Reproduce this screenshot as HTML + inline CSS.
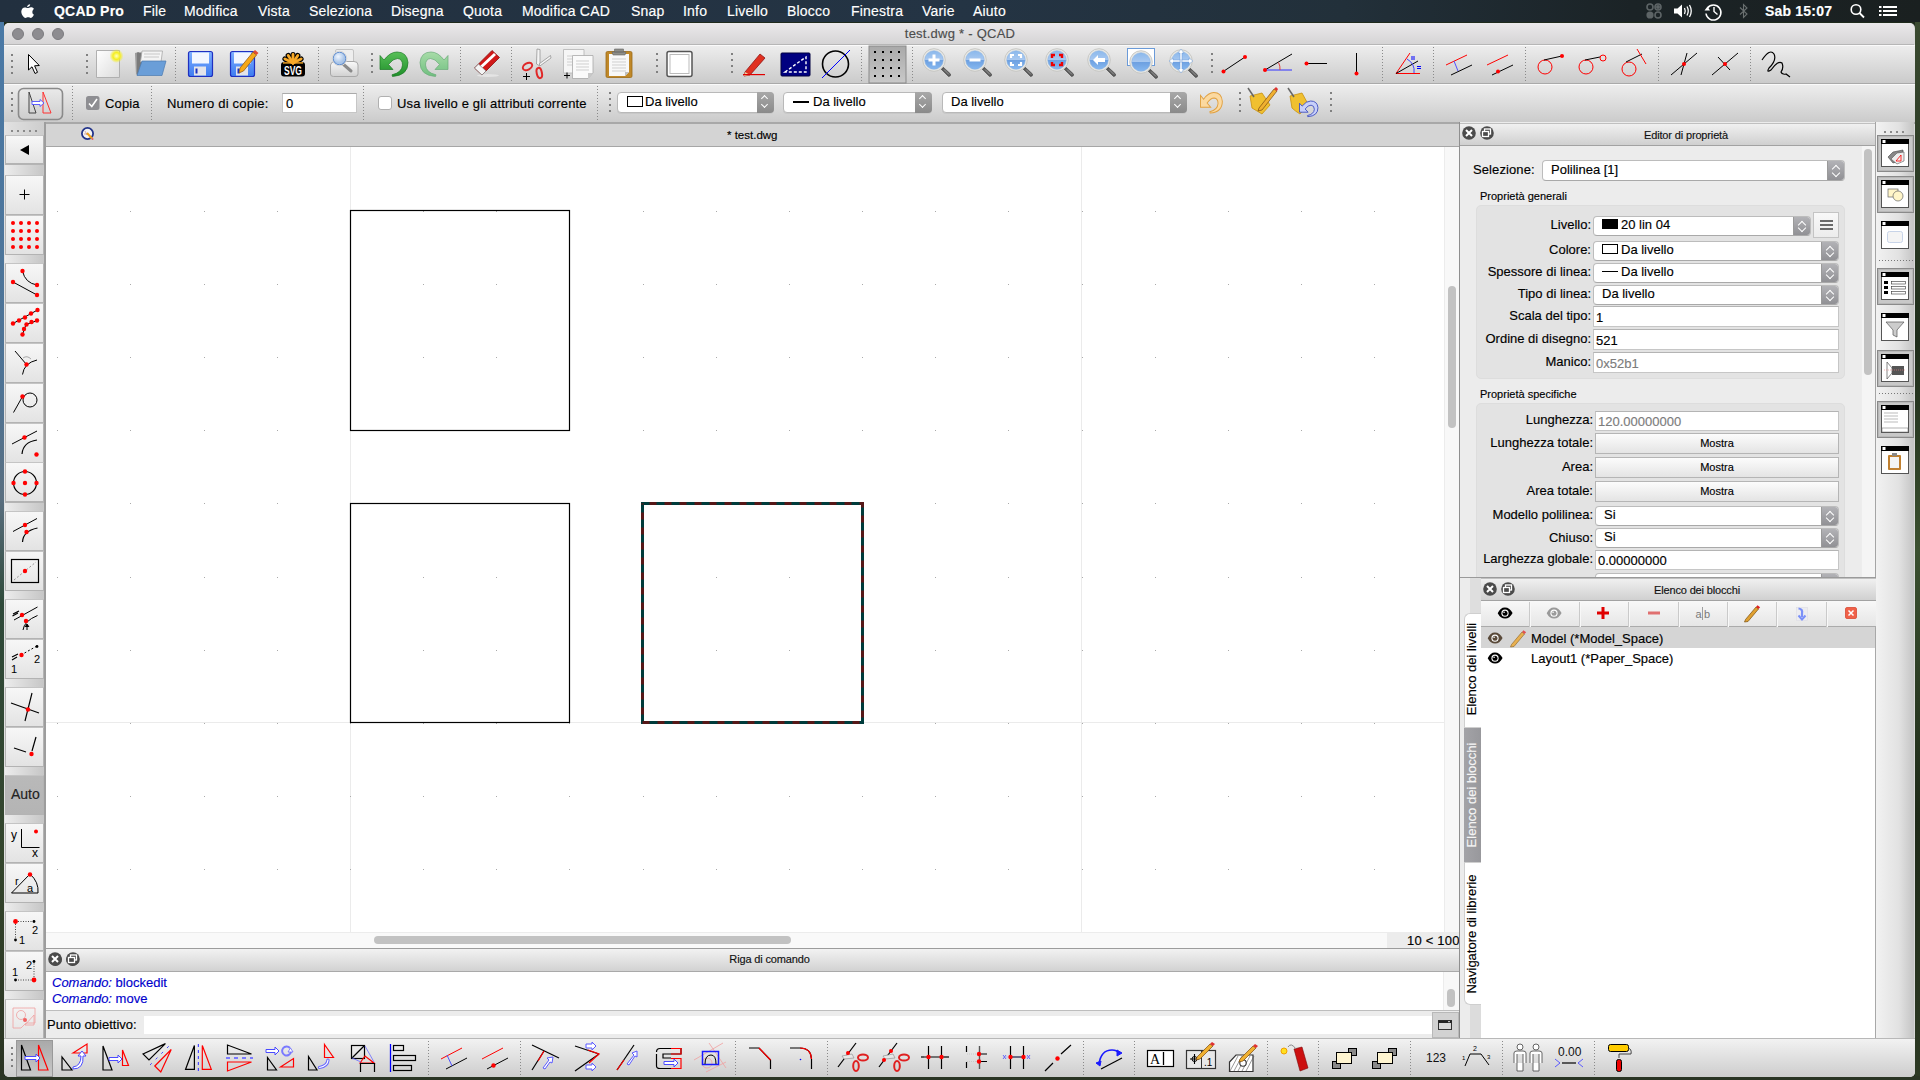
<!DOCTYPE html>
<html><head><meta charset="utf-8">
<style>
*{margin:0;padding:0;box-sizing:border-box}
html,body{width:1920px;height:1080px;overflow:hidden;font-family:"Liberation Sans",sans-serif;font-size:13px;color:#000;-webkit-text-stroke:0.15px currentColor}
body{position:relative;background:#1f2a1c}
.a{position:absolute}
svg{position:absolute;overflow:visible}
#menubar{left:0;top:0;width:1920px;height:22px;background:linear-gradient(90deg,#22303f 0,#243444 50%,#22303a 70%,#1b2326 85%,#1a2020 100%);color:#fff;font-size:14px}
#menubar span{position:absolute;top:3px;white-space:nowrap;letter-spacing:0.2px}
#title{left:4px;top:23px;width:1910px;height:22px;background:linear-gradient(#ebe9eb,#d5d4d5);border-bottom:1px solid #b6b6b6;border-radius:5px 5px 0 0;text-align:center;font-size:13px;color:#4d4d4d;line-height:22px;letter-spacing:0.25px;padding-left:2px}
.tl{position:absolute;top:5px;width:12px;height:12px;border-radius:50%;background:#8d8c90;border:1px solid #7c7b7f}
.tb{left:4px;width:1911px;background:linear-gradient(#ededed,#cbcbcb);border-top:1px solid #fafafa;border-bottom:1px solid #aaaaaa}
.vsep{position:absolute;width:0;border-left:2px dotted #7a7a7a}
.hand{position:absolute;width:0;border-left:2px dotted #888}
#leftdock{left:4px;top:122px;width:41px;height:916px;background:linear-gradient(90deg,#e6e6e6,#cfcfcf);border-right:1px solid #b8b8b8}
.lb{position:absolute;left:1px;width:39px;height:30px;background:linear-gradient(#f4f4f4,#e4e4e4);border:1px solid #bdbdbd;border-radius:1px}
.lg{position:absolute;left:1px;width:39px;background:linear-gradient(90deg,#e4e4e4,#cdcdcd)}
#tabbar{left:46px;top:124px;width:1413px;height:23px;background:#d4d4d4;border-bottom:1px solid #a6a6a6;font-size:12px}
#canvas{left:46px;top:147px;width:1398px;height:785px;background:#fff;overflow:hidden}
#vscroll{left:1444px;top:147px;width:15px;height:785px;background:#f8f8f8;border-left:1px solid #ececec}
#hscroll{left:46px;top:932px;width:1413px;height:16px;background:#f9f9f9;border-top:1px solid #ececec}
.thumb{position:absolute;background:#c2c2c2;border-radius:4px}
.dtitle{position:absolute;height:24px;background:linear-gradient(#f2f2f2,#d2d2d2);border-top:1px solid #9c9c9c;border-bottom:1px solid #a9a9a9;font-size:11px;text-align:center;line-height:21px;color:#111;letter-spacing:-0.15px}
.cbtn{position:absolute;top:4px;width:13px;height:13px;border-radius:50%;background:#4a4a4a}
#cmdout{left:46px;top:972px;width:1413px;height:39px;background:#fff;border-bottom:1px solid #bdbdbd;color:#0000cc;font-size:13px}
#cmdin{left:46px;top:1011px;width:1413px;height:27px;background:#ececec}
#prop{left:1459px;top:122px;width:417px;height:456px;background:#ececec;border-left:2px solid #9d9d9d}
#tabs{left:1459px;top:578px;width:22px;height:460px;background:#ececec;border-left:2px solid #9d9d9d}
#blocks{left:1481px;top:578px;width:395px;height:460px;background:#fff}
#rdock{left:1876px;top:122px;width:38px;height:916px;background:linear-gradient(90deg,#ececec,#cfcfcf)}
#btb{left:4px;top:1038px;width:1911px;height:39px;background:linear-gradient(#f2f2f2,#cdcdcd);border-top:1px solid #b8b8b8;border-radius:0 0 5px 5px}
.lbl{position:absolute;white-space:nowrap;font-size:13px}
.field{position:absolute;background:#fff;border:1px solid #c4c4c4;height:20px;font-size:12px;line-height:18px;padding-left:3px;white-space:nowrap}
.combo{position:absolute;background:#fff;border:1px solid #b9b9b9;border-radius:4px;height:20px;font-size:12px;line-height:18px;padding-left:6px;white-space:nowrap;box-shadow:0 1px 0 #c8c8c8}
.combo i{position:absolute;right:-1px;top:-1px;width:17px;height:20px;background:linear-gradient(#a8a8a8,#8a8a8a);border-radius:0 4px 4px 0}
.combo i:before{content:"";position:absolute;left:5px;top:4px;width:4px;height:4px;border-left:1.5px solid #fff;border-top:1.5px solid #fff;transform:rotate(45deg)}
.combo i:after{content:"";position:absolute;left:5px;top:10px;width:4px;height:4px;border-right:1.5px solid #fff;border-bottom:1.5px solid #fff;transform:rotate(45deg)}
.mbtn{position:absolute;height:21px;background:linear-gradient(#fbfbfb,#e3e3e3);border:1px solid #b8b8b8;font-size:11px;text-align:center;line-height:19px}
.group{position:absolute;background:#e3e3e3;border:1px solid #dcdcdc;border-radius:5px}
.cb{background:#fff;border:1px solid #bcbcbc;border-bottom-color:#a9a9a9;border-radius:4px;overflow:hidden}
.cba{right:0;top:0;background:linear-gradient(#b2b2b6,#8d8d91);border-left:1px solid #9a9a9a}
.cba:before{content:"";position:absolute;left:5px;top:5px;width:5px;height:5px;border-left:1.5px solid #fff;border-top:1.5px solid #fff;transform:rotate(45deg)}
.cba:after{content:"";position:absolute;left:5px;bottom:6px;width:5px;height:5px;border-right:1.5px solid #fff;border-bottom:1.5px solid #fff;transform:rotate(45deg)}
.fld{background:#fff;border:1px solid #c6c6c6;border-top-color:#b4b4b4}
.grp{background:#e3e3e3;border:1px solid #dddddd;border-radius:5px}
.mb{background:linear-gradient(#fcfcfc,#e4e4e4);border:1px solid #b5b5b5;font-size:11px;text-align:center;line-height:19px}
.dtb{background:linear-gradient(#f0f0f0,#d0d0d0);border-bottom:1px solid #a2a2a2;border-top:1px solid #c0c0c0}
</style></head><body>

<!-- desktop -->
<div class="a" style="left:0;top:22px;width:4px;height:1058px;background:linear-gradient(#4a79a6,#4f7394 35%,#5a6f80 45%,#2f4a3a 55%,#34452c 80%,#2a3322)"></div>
<div class="a" style="left:1915px;top:22px;width:5px;height:1058px;background:linear-gradient(#3a4a30,#1e2c1a 30%,#3b5030 50%,#1e2a18 75%,#2d3a24)"></div>
<div class="a" style="left:0;top:1076px;width:1920px;height:4px;background:#2a3524"></div>

<div class="a" style="left:4px;top:23px;width:1911px;height:1054px;background:#d8d8d8;border-radius:5px"></div>
<div id="menubar" class="a">
<span style="left:54px;font-weight:bold">QCAD Pro</span>
<span style="left:143px">File</span>
<span style="left:184px">Modifica</span>
<span style="left:258px">Vista</span>
<span style="left:309px">Seleziona</span>
<span style="left:391px">Disegna</span>
<span style="left:463px">Quota</span>
<span style="left:522px">Modifica CAD</span>
<span style="left:631px">Snap</span>
<span style="left:683px">Info</span>
<span style="left:727px">Livello</span>
<span style="left:787px">Blocco</span>
<span style="left:851px">Finestra</span>
<span style="left:922px">Varie</span>
<span style="left:973px">Aiuto</span>
<span style="left:1765px;font-weight:bold">Sab 15:07</span>
<svg width="1920" height="24" style="left:0;top:0">
<path d="M30.2 4.2 C28.6 4.3 27.2 5.4 27 7 C28.6 7.1 30.1 5.9 30.2 4.2 Z M33.9 14.6 C33.3 16.1 32.2 18 30.9 18 C29.8 18 29.5 17.3 28.2 17.3 C26.9 17.3 26.5 18 25.5 18 C24.1 18 21.3 15 21.3 11.6 C21.3 8.9 23.1 7.4 24.8 7.4 C26 7.4 26.8 8.1 27.8 8.1 C28.7 8.1 29.5 7.3 30.9 7.3 C31.7 7.3 33.1 7.6 34 8.9 C31.6 10.3 32.1 13.9 33.9 14.6 Z" fill="#fff"/>
<g fill="none" stroke="#5d6466" stroke-width="1.6"><circle cx="1650" cy="7" r="3"/><circle cx="1658" cy="7" r="3"/><circle cx="1658" cy="15" r="3"/></g>
<circle cx="1650" cy="15" r="3.6" fill="#5d6466"/><circle cx="1658" cy="7" r="2" fill="#5d6466"/>
<path d="M1674 8.5 H1677.5 L1682 4.5 V17.5 L1677.5 13.5 H1674 Z" fill="#fff"/>
<path d="M1684.5 8 Q1686 11 1684.5 14 M1687 6.5 Q1689.5 11 1687 15.5 M1689.5 5 Q1693 11 1689.5 17" stroke="#fff" stroke-width="1.3" fill="none"/>
<path d="M1707.5 8 A7.5 7.5 0 1 1 1706 13.5" stroke="#fff" stroke-width="1.5" fill="none"/>
<path d="M1704.5 10.5 L1707.5 6.5 L1710 10.5 Z" fill="#fff"/>
<path d="M1714 7 V11.5 L1717.5 14.5" stroke="#fff" stroke-width="1.4" fill="none"/>
<path d="M1740 7.5 L1747 14 L1743.5 17.5 V4.5 L1747 8 L1740 14.5" stroke="#6a7070" stroke-width="1.1" fill="none"/>
<circle cx="1856" cy="9.5" r="4.8" stroke="#fff" stroke-width="1.6" fill="none"/>
<line x1="1859.5" y1="13" x2="1864" y2="17.5" stroke="#fff" stroke-width="1.8"/>
<g fill="#fff"><rect x="1879" y="6" width="2.5" height="2"/><rect x="1879" y="10" width="2.5" height="2"/><rect x="1879" y="14" width="2.5" height="2"/>
<rect x="1883" y="6" width="14" height="2"/><rect x="1883" y="10" width="14" height="2"/><rect x="1883" y="14" width="14" height="2"/></g>
</svg>

</div>

<div id="title" class="a">test.dwg * - QCAD
 <div class="tl" style="left:8px"></div><div class="tl" style="left:28px"></div><div class="tl" style="left:48px"></div>
</div>

<div class="a tb" style="top:45px;height:39px"></div>
<svg width="1920" height="1080" style="left:0;top:0;z-index:5"><defs>
<linearGradient id="lens" x1="0" y1="0" x2="0" y2="1"><stop offset="0" stop-color="#8ab8ec"/><stop offset="0.48" stop-color="#a8c8f0"/><stop offset="0.5" stop-color="#6c9fe0"/><stop offset="1" stop-color="#86b8f0"/></linearGradient>
<linearGradient id="paper" x1="0" y1="0" x2="1" y2="1"><stop offset="0" stop-color="#ffffff"/><stop offset="1" stop-color="#dcdcdc"/></linearGradient>
<linearGradient id="floppy" x1="0" y1="0" x2="0" y2="1"><stop offset="0" stop-color="#7fb0ff"/><stop offset="1" stop-color="#3d7bf0"/></linearGradient>
<radialGradient id="glow"><stop offset="0" stop-color="#ffffc0"/><stop offset="0.5" stop-color="#f5ee20"/><stop offset="1" stop-color="#f5ee20" stop-opacity="0"/></radialGradient>
<linearGradient id="gridbtn" x1="0" y1="0" x2="0" y2="1"><stop offset="0" stop-color="#a9a9a9"/><stop offset="1" stop-color="#c9c9c9"/></linearGradient>
</defs>
<rect x="11" y="54" width="2" height="2" fill="#808080"/><rect x="11" y="60" width="2" height="2" fill="#808080"/><rect x="11" y="66" width="2" height="2" fill="#808080"/><rect x="11" y="72" width="2" height="2" fill="#808080"/>
<rect x="86" y="54" width="2" height="2" fill="#808080"/><rect x="86" y="60" width="2" height="2" fill="#808080"/><rect x="86" y="66" width="2" height="2" fill="#808080"/><rect x="86" y="72" width="2" height="2" fill="#808080"/>
<path d="M28.5 54.5 L28.5 70 L32 66.8 L35 73.5 L37.5 72.3 L34.6 65.8 L39.3 65.5 Z" fill="#fff" stroke="#000" stroke-width="1" stroke-linejoin="round"/>
<path d="M96.5 50.5 H119.5 V77.5 H96.5 Z" fill="url(#paper)" stroke="#b0b0b0"/>
<circle cx="116.5" cy="56" r="7" fill="url(#glow)"/>
<path d="M135 53 L139 52 L137 74 L136 75 Z" fill="#9a9a9a"/>
<path d="M137 52.5 H144 L141 75 H137 Z" fill="#7a7a7a"/>
<path d="M142 51 H162.5 L161 62 H140.5 Z" fill="#f4f4f4" stroke="#a8a8a8" stroke-width="0.8"/>
<path d="M144 54 H160 M144 57 H159" stroke="#c8c8c8" stroke-width="1"/>
<path d="M142 61 H166 L162 75.5 H137 Z" fill="#6a9ed8" stroke="#4a7ab0" stroke-width="0.7"/>
<rect x="175" y="47" width="1" height="1" fill="#8a8a8a"/><rect x="175" y="50" width="1" height="1" fill="#8a8a8a"/><rect x="175" y="53" width="1" height="1" fill="#8a8a8a"/><rect x="175" y="56" width="1" height="1" fill="#8a8a8a"/><rect x="175" y="59" width="1" height="1" fill="#8a8a8a"/><rect x="175" y="62" width="1" height="1" fill="#8a8a8a"/><rect x="175" y="65" width="1" height="1" fill="#8a8a8a"/><rect x="175" y="68" width="1" height="1" fill="#8a8a8a"/><rect x="175" y="71" width="1" height="1" fill="#8a8a8a"/><rect x="175" y="74" width="1" height="1" fill="#8a8a8a"/><rect x="175" y="77" width="1" height="1" fill="#8a8a8a"/><rect x="175" y="80" width="1" height="1" fill="#8a8a8a"/>
<rect x="188.5" y="51.5" width="24" height="25" rx="2" fill="url(#floppy)" stroke="#2030c0" stroke-width="1.2"/>
<rect x="192" y="52.5" width="17" height="11" fill="#f2f6ff"/>
<rect x="194" y="66.5" width="12" height="9" fill="#e4e4ea"/>
<rect x="195.5" y="68.5" width="2" height="5" fill="#1830c0"/>
<rect x="230.5" y="51.5" width="24" height="25" rx="2" fill="url(#floppy)" stroke="#2030c0" stroke-width="1.2"/>
<rect x="234" y="52.5" width="17" height="11" fill="#f2f6ff"/>
<rect x="236" y="66.5" width="12" height="9" fill="#e4e4ea"/>
<rect x="237.5" y="68.5" width="2" height="5" fill="#1830c0"/>
<path d="M240 68 L253 52 L256.5 55 L243.5 71 L239 73 Z" fill="#f5a818" stroke="#8a5010" stroke-width="0.7"/>
<path d="M253 52 L255 50 L258.5 53 L256.5 55 Z" fill="#e04a30"/>
<rect x="267" y="47" width="1" height="1" fill="#8a8a8a"/><rect x="267" y="50" width="1" height="1" fill="#8a8a8a"/><rect x="267" y="53" width="1" height="1" fill="#8a8a8a"/><rect x="267" y="56" width="1" height="1" fill="#8a8a8a"/><rect x="267" y="59" width="1" height="1" fill="#8a8a8a"/><rect x="267" y="62" width="1" height="1" fill="#8a8a8a"/><rect x="267" y="65" width="1" height="1" fill="#8a8a8a"/><rect x="267" y="68" width="1" height="1" fill="#8a8a8a"/><rect x="267" y="71" width="1" height="1" fill="#8a8a8a"/><rect x="267" y="74" width="1" height="1" fill="#8a8a8a"/><rect x="267" y="77" width="1" height="1" fill="#8a8a8a"/><rect x="267" y="80" width="1" height="1" fill="#8a8a8a"/>
<line x1="293" y1="64" x2="285" y2="59" stroke="#000" stroke-width="5.2" stroke-linecap="round"/><line x1="293" y1="64" x2="288.2" y2="55.5" stroke="#000" stroke-width="5.2" stroke-linecap="round"/><line x1="293" y1="64" x2="293" y2="54.5" stroke="#000" stroke-width="5.2" stroke-linecap="round"/><line x1="293" y1="64" x2="297.8" y2="55.5" stroke="#000" stroke-width="5.2" stroke-linecap="round"/><line x1="293" y1="64" x2="301" y2="59" stroke="#000" stroke-width="5.2" stroke-linecap="round"/>
<rect x="281" y="62" width="24" height="14.5" rx="3" fill="#000"/>
<line x1="293" y1="63" x2="285" y2="59" stroke="#f7a928" stroke-width="2.8" stroke-linecap="round"/><line x1="293" y1="63" x2="288.2" y2="55.5" stroke="#f7a928" stroke-width="2.8" stroke-linecap="round"/><line x1="293" y1="63" x2="293" y2="54.5" stroke="#f7a928" stroke-width="2.8" stroke-linecap="round"/><line x1="293" y1="63" x2="297.8" y2="55.5" stroke="#f7a928" stroke-width="2.8" stroke-linecap="round"/><line x1="293" y1="63" x2="301" y2="59" stroke="#f7a928" stroke-width="2.8" stroke-linecap="round"/>
<rect x="283" y="62.2" width="20" height="1.4" fill="#f7a928"/>
<text x="293" y="75" font-family="Liberation Sans" font-weight="bold" font-size="12" fill="#fff" text-anchor="middle" textLength="18" lengthAdjust="spacingAndGlyphs">SVG</text>
<rect x="318" y="47" width="1" height="1" fill="#8a8a8a"/><rect x="318" y="50" width="1" height="1" fill="#8a8a8a"/><rect x="318" y="53" width="1" height="1" fill="#8a8a8a"/><rect x="318" y="56" width="1" height="1" fill="#8a8a8a"/><rect x="318" y="59" width="1" height="1" fill="#8a8a8a"/><rect x="318" y="62" width="1" height="1" fill="#8a8a8a"/><rect x="318" y="65" width="1" height="1" fill="#8a8a8a"/><rect x="318" y="68" width="1" height="1" fill="#8a8a8a"/><rect x="318" y="71" width="1" height="1" fill="#8a8a8a"/><rect x="318" y="74" width="1" height="1" fill="#8a8a8a"/><rect x="318" y="77" width="1" height="1" fill="#8a8a8a"/><rect x="318" y="80" width="1" height="1" fill="#8a8a8a"/>
<defs><linearGradient id="prn" x1="0" y1="0" x2="0" y2="1"><stop offset="0" stop-color="#fafafa"/><stop offset="1" stop-color="#d0d0d0"/></linearGradient><radialGradient id="lens2" cx="0.4" cy="0.35"><stop offset="0" stop-color="#f0f6ff"/><stop offset="1" stop-color="#a8c4e8"/></radialGradient></defs>
<rect x="335.5" y="49.5" width="18" height="14" rx="1.5" fill="#eeeeee" stroke="#c4c4c4"/>
<path d="M330.5 65 Q331 61.5 335 61.5 H354 Q358 61.5 358 65 V74 Q358 76.5 355 76.5 H333.5 Q330.5 76.5 330.5 74 Z" fill="url(#prn)" stroke="#a8a8a8"/>
<line x1="343" y1="64" x2="351" y2="71" stroke="#8a8a8a" stroke-width="3" stroke-linecap="round"/>
<circle cx="339.5" cy="58.5" r="6.3" fill="url(#lens2)" stroke="#5a8ad0" stroke-width="1"/>
<circle cx="339.5" cy="58.5" r="7.3" fill="none" stroke="#d8d8d8" stroke-width="1"/>
<rect x="371" y="53" width="2" height="2" fill="#808080"/><rect x="371" y="59" width="2" height="2" fill="#808080"/><rect x="371" y="65" width="2" height="2" fill="#808080"/><rect x="371" y="71" width="2" height="2" fill="#808080"/>
<defs><linearGradient id="ug" x1="0" y1="0" x2="0" y2="1"><stop offset="0" stop-color="#58c058"/><stop offset="1" stop-color="#1f8f2a"/></linearGradient><linearGradient id="rg" x1="0" y1="0" x2="0" y2="1"><stop offset="0" stop-color="#a8dca8"/><stop offset="1" stop-color="#70bf80"/></linearGradient></defs>
<path d="M380 55.5 L380 69.5 L393 69.5 L388.5 64.5 Q393 58.5 397.5 58.5 Q402.5 59 402.5 65 Q402 72.5 392 74.8 L392.5 76.5 Q408 75.5 408 62.5 Q407 52 397 52 Q390 52 384 60 Z" fill="url(#ug)" stroke="#1a7a22" stroke-width="0.7"/>
<g transform="translate(828,0) scale(-1,1)"><path d="M380 55.5 L380 69.5 L393 69.5 L388.5 64.5 Q393 58.5 397.5 58.5 Q402.5 59 402.5 65 Q402 72.5 392 74.8 L392.5 76.5 Q408 75.5 408 62.5 Q407 52 397 52 Q390 52 384 60 Z" fill="url(#rg)" stroke="#6aaa78" stroke-width="0.7"/></g>
<rect x="460" y="47" width="1" height="1" fill="#8a8a8a"/><rect x="460" y="50" width="1" height="1" fill="#8a8a8a"/><rect x="460" y="53" width="1" height="1" fill="#8a8a8a"/><rect x="460" y="56" width="1" height="1" fill="#8a8a8a"/><rect x="460" y="59" width="1" height="1" fill="#8a8a8a"/><rect x="460" y="62" width="1" height="1" fill="#8a8a8a"/><rect x="460" y="65" width="1" height="1" fill="#8a8a8a"/><rect x="460" y="68" width="1" height="1" fill="#8a8a8a"/><rect x="460" y="71" width="1" height="1" fill="#8a8a8a"/><rect x="460" y="74" width="1" height="1" fill="#8a8a8a"/><rect x="460" y="77" width="1" height="1" fill="#8a8a8a"/><rect x="460" y="80" width="1" height="1" fill="#8a8a8a"/>
<ellipse cx="488" cy="75.5" rx="11" ry="1.5" fill="#e4e4e4"/>
<path d="M474.5 68 L492 50.5 L499.5 57.5 L482 75 Z" fill="#d01818" stroke="#8a1010" stroke-width="0.8"/>
<path d="M479 67 L494 53 L496 55 L481 69 Z" fill="#fff"/>
<path d="M474.5 68 L478.5 64 L486 71 L482 75 Z" fill="#f4f4f4" stroke="#888" stroke-width="0.8"/>
<rect x="511" y="47" width="1" height="1" fill="#8a8a8a"/><rect x="511" y="50" width="1" height="1" fill="#8a8a8a"/><rect x="511" y="53" width="1" height="1" fill="#8a8a8a"/><rect x="511" y="56" width="1" height="1" fill="#8a8a8a"/><rect x="511" y="59" width="1" height="1" fill="#8a8a8a"/><rect x="511" y="62" width="1" height="1" fill="#8a8a8a"/><rect x="511" y="65" width="1" height="1" fill="#8a8a8a"/><rect x="511" y="68" width="1" height="1" fill="#8a8a8a"/><rect x="511" y="71" width="1" height="1" fill="#8a8a8a"/><rect x="511" y="74" width="1" height="1" fill="#8a8a8a"/><rect x="511" y="77" width="1" height="1" fill="#8a8a8a"/><rect x="511" y="80" width="1" height="1" fill="#8a8a8a"/>
<path d="M537 49 L540 49.5 L540 66 L536.5 64 Z" fill="#f4f4f4" stroke="#8a8a8a" stroke-width="0.7"/>
<path d="M539 64 L550.5 55.5 L551 58 L540.5 65.5 Z" fill="#f4f4f4" stroke="#8a8a8a" stroke-width="0.7"/>
<ellipse cx="527.5" cy="66.5" rx="5" ry="3.2" transform="rotate(-28 527.5 66.5)" fill="none" stroke="#e02828" stroke-width="2"/>
<ellipse cx="539.3" cy="73" rx="2.6" ry="5.2" transform="rotate(-12 539.3 73)" fill="none" stroke="#e02828" stroke-width="2"/>
<path d="M523 76.5 H530 M526.5 73 V80" stroke="#000" stroke-width="1"/>
<path d="M563.5 49.5 H584 V73 H563.5 Z" fill="#f6f6f6" stroke="#b4b4b4" stroke-width="0.8"/>
<line x1="567" y1="56" x2="572" y2="56" stroke="#d0d0d0" stroke-width="1"/><line x1="567" y1="59" x2="572" y2="59" stroke="#d0d0d0" stroke-width="1"/><line x1="567" y1="62" x2="572" y2="62" stroke="#d0d0d0" stroke-width="1"/><line x1="567" y1="65" x2="572" y2="65" stroke="#d0d0d0" stroke-width="1"/>
<path d="M572.5 55.5 H593 V73 L588 78.5 H572.5 Z" fill="#fafafa" stroke="#a8a8a8" stroke-width="0.8"/>
<path d="M593 73 L588 78.5 V73 Z" fill="#c8c8c8"/>
<line x1="576" y1="61" x2="589" y2="61" stroke="#cfcfcf" stroke-width="1"/><line x1="576" y1="64" x2="589" y2="64" stroke="#cfcfcf" stroke-width="1"/><line x1="576" y1="67" x2="589" y2="67" stroke="#cfcfcf" stroke-width="1"/><line x1="576" y1="70" x2="589" y2="70" stroke="#cfcfcf" stroke-width="1"/>
<path d="M564 75.5 H570 M567 72.5 V78.5" stroke="#000" stroke-width="1"/>
<rect x="606" y="51.5" width="26" height="26" rx="1.5" fill="#c08828" stroke="#9a6a18" stroke-width="0.8"/>
<path d="M609 54 H629 V72 L625 76 H609 Z" fill="#f8f8f8"/>
<path d="M629 72 L625 76 V72 Z" fill="#c0c0c0"/>
<path d="M612 52 H626 L625 55 H613 Z M614.5 49 H623.5 V52 H614.5 Z" fill="#8e8e88" stroke="#666" stroke-width="0.6"/>
<line x1="612" y1="59" x2="626" y2="59" stroke="#cfcfcf" stroke-width="1"/><line x1="612" y1="62" x2="626" y2="62" stroke="#cfcfcf" stroke-width="1"/><line x1="612" y1="65" x2="626" y2="65" stroke="#cfcfcf" stroke-width="1"/><line x1="612" y1="68" x2="626" y2="68" stroke="#cfcfcf" stroke-width="1"/><line x1="612" y1="71" x2="626" y2="71" stroke="#cfcfcf" stroke-width="1"/>
<rect x="656" y="53" width="2" height="2" fill="#808080"/><rect x="656" y="59" width="2" height="2" fill="#808080"/><rect x="656" y="65" width="2" height="2" fill="#808080"/><rect x="656" y="71" width="2" height="2" fill="#808080"/>
<rect x="667" y="51.5" width="25" height="25" rx="2" fill="#fff" stroke="#555" stroke-width="1.5"/>
<rect x="670" y="54.5" width="19" height="19" fill="#fff" stroke="#bbb" stroke-width="1"/>
<rect x="731" y="53" width="2" height="2" fill="#808080"/><rect x="731" y="59" width="2" height="2" fill="#808080"/><rect x="731" y="65" width="2" height="2" fill="#808080"/><rect x="731" y="71" width="2" height="2" fill="#808080"/>
<path d="M745 72 L760 54 L765 58 L750 75 L744 76 Z" fill="#e03020" stroke="#901818" stroke-width="0.8"/>
<path d="M744 76 L745 72 L750 75 Z" fill="#f0d0a0"/>
<rect x="743" y="74" width="22" height="1.2" fill="#e00000"/>
<rect x="781" y="53" width="29" height="23" rx="1" fill="#000080" stroke="#000040"/>
<path d="M785 72 L806 57 V72 Z" fill="none" stroke="#fff" stroke-width="1.4" stroke-dasharray="3 2"/>
<circle cx="835.5" cy="64" r="13" fill="none" stroke="#000" stroke-width="1.6"/>
<line x1="822" y1="78" x2="850" y2="50" stroke="#0000ff" stroke-width="1"/>
<rect x="861" y="47" width="1" height="1" fill="#8a8a8a"/><rect x="861" y="50" width="1" height="1" fill="#8a8a8a"/><rect x="861" y="53" width="1" height="1" fill="#8a8a8a"/><rect x="861" y="56" width="1" height="1" fill="#8a8a8a"/><rect x="861" y="59" width="1" height="1" fill="#8a8a8a"/><rect x="861" y="62" width="1" height="1" fill="#8a8a8a"/><rect x="861" y="65" width="1" height="1" fill="#8a8a8a"/><rect x="861" y="68" width="1" height="1" fill="#8a8a8a"/><rect x="861" y="71" width="1" height="1" fill="#8a8a8a"/><rect x="861" y="74" width="1" height="1" fill="#8a8a8a"/><rect x="861" y="77" width="1" height="1" fill="#8a8a8a"/><rect x="861" y="80" width="1" height="1" fill="#8a8a8a"/>
<rect x="869" y="46" width="37" height="37" fill="url(#gridbtn)" stroke="#8a8a8a"/>
<rect x="874" y="51" width="2" height="2" fill="#000"/><rect x="874" y="59" width="2" height="2" fill="#000"/><rect x="874" y="67" width="2" height="2" fill="#000"/><rect x="874" y="75" width="2" height="2" fill="#000"/><rect x="882" y="51" width="2" height="2" fill="#000"/><rect x="882" y="59" width="2" height="2" fill="#000"/><rect x="882" y="67" width="2" height="2" fill="#000"/><rect x="882" y="75" width="2" height="2" fill="#000"/><rect x="890" y="51" width="2" height="2" fill="#000"/><rect x="890" y="59" width="2" height="2" fill="#000"/><rect x="890" y="67" width="2" height="2" fill="#000"/><rect x="890" y="75" width="2" height="2" fill="#000"/><rect x="898" y="51" width="2" height="2" fill="#000"/><rect x="898" y="59" width="2" height="2" fill="#000"/><rect x="898" y="67" width="2" height="2" fill="#000"/><rect x="898" y="75" width="2" height="2" fill="#000"/>
<rect x="912" y="47" width="1" height="1" fill="#8a8a8a"/><rect x="912" y="50" width="1" height="1" fill="#8a8a8a"/><rect x="912" y="53" width="1" height="1" fill="#8a8a8a"/><rect x="912" y="56" width="1" height="1" fill="#8a8a8a"/><rect x="912" y="59" width="1" height="1" fill="#8a8a8a"/><rect x="912" y="62" width="1" height="1" fill="#8a8a8a"/><rect x="912" y="65" width="1" height="1" fill="#8a8a8a"/><rect x="912" y="68" width="1" height="1" fill="#8a8a8a"/><rect x="912" y="71" width="1" height="1" fill="#8a8a8a"/><rect x="912" y="74" width="1" height="1" fill="#8a8a8a"/><rect x="912" y="77" width="1" height="1" fill="#8a8a8a"/><rect x="912" y="80" width="1" height="1" fill="#8a8a8a"/>
<g>
<path d="M941 69 L943 67 L950.5 74 Q951 76.5 948.5 76.5 Z" fill="#5a5a5a" stroke="#444" stroke-width="0.6"/>
<line x1="944" y1="69.5" x2="949" y2="74.5" stroke="#9a9a9a" stroke-width="1"/>
<circle cx="934" cy="60" r="11.3" fill="#e8e8e4" stroke="#c0c0bc" stroke-width="0.8"/>
<circle cx="934" cy="60" r="9.3" fill="url(#lens)" stroke="#8ab0e0" stroke-width="0.5"/>
<path d="M928.5 60 H939.5 M934 54.5 V65.5" stroke="#fff" stroke-width="3"/></g>
<g>
<path d="M982 69 L984 67 L991.5 74 Q992 76.5 989.5 76.5 Z" fill="#5a5a5a" stroke="#444" stroke-width="0.6"/>
<line x1="985" y1="69.5" x2="990" y2="74.5" stroke="#9a9a9a" stroke-width="1"/>
<circle cx="975" cy="60" r="11.3" fill="#e8e8e4" stroke="#c0c0bc" stroke-width="0.8"/>
<circle cx="975" cy="60" r="9.3" fill="url(#lens)" stroke="#8ab0e0" stroke-width="0.5"/>
<path d="M969.5 60 H980.5" stroke="#fff" stroke-width="3"/></g>
<g>
<path d="M1023 69 L1025 67 L1032.5 74 Q1033 76.5 1030.5 76.5 Z" fill="#5a5a5a" stroke="#444" stroke-width="0.6"/>
<line x1="1026" y1="69.5" x2="1031" y2="74.5" stroke="#9a9a9a" stroke-width="1"/>
<circle cx="1016" cy="60" r="11.3" fill="#e8e8e4" stroke="#c0c0bc" stroke-width="0.8"/>
<circle cx="1016" cy="60" r="9.3" fill="url(#lens)" stroke="#8ab0e0" stroke-width="0.5"/>
<path d="M1011 58 V55 H1014 M1018 55 H1021 V58 M1021 62 V65 H1018 M1014 65 H1011 V62" stroke="#fff" stroke-width="2.2" fill="none"/></g>
<g>
<path d="M1064 69 L1066 67 L1073.5 74 Q1074 76.5 1071.5 76.5 Z" fill="#5a5a5a" stroke="#444" stroke-width="0.6"/>
<line x1="1067" y1="69.5" x2="1072" y2="74.5" stroke="#9a9a9a" stroke-width="1"/>
<circle cx="1057" cy="60" r="11.3" fill="#e8e8e4" stroke="#c0c0bc" stroke-width="0.8"/>
<circle cx="1057" cy="60" r="9.3" fill="url(#lens)" stroke="#8ab0e0" stroke-width="0.5"/>
<path d="M1052 58 V55 H1055 M1059 55 H1062 V58 M1062 62 V65 H1059 M1055 65 H1052 V62" stroke="#ee0000" stroke-width="2.4" fill="none"/></g>
<g>
<path d="M1106 69 L1108 67 L1115.5 74 Q1116 76.5 1113.5 76.5 Z" fill="#5a5a5a" stroke="#444" stroke-width="0.6"/>
<line x1="1109" y1="69.5" x2="1114" y2="74.5" stroke="#9a9a9a" stroke-width="1"/>
<circle cx="1099" cy="60" r="11.3" fill="#e8e8e4" stroke="#c0c0bc" stroke-width="0.8"/>
<circle cx="1099" cy="60" r="9.3" fill="url(#lens)" stroke="#8ab0e0" stroke-width="0.5"/>
<path d="M1093 60 L1098 55 V58 H1105 V62 H1098 V65 Z" fill="#fff"/></g>
<rect x="1127.5" y="48.5" width="27" height="17" fill="#fff" stroke="#6a9ad8"/>
<g>
<path d="M1148 71 L1150 69 L1157.5 76 Q1158 78.5 1155.5 78.5 Z" fill="#5a5a5a" stroke="#444" stroke-width="0.6"/>
<line x1="1151" y1="71.5" x2="1156" y2="76.5" stroke="#9a9a9a" stroke-width="1"/>
<circle cx="1141" cy="62" r="11.3" fill="#e8e8e4" stroke="#c0c0bc" stroke-width="0.8"/>
<circle cx="1141" cy="62" r="9.3" fill="url(#lens)" stroke="#8ab0e0" stroke-width="0.5"/>
</g>
<g>
<path d="M1188 70 L1190 68 L1197.5 75 Q1198 77.5 1195.5 77.5 Z" fill="#5a5a5a" stroke="#444" stroke-width="0.6"/>
<line x1="1191" y1="70.5" x2="1196" y2="75.5" stroke="#9a9a9a" stroke-width="1"/>
<circle cx="1181" cy="61" r="11.3" fill="#e8e8e4" stroke="#c0c0bc" stroke-width="0.8"/>
<circle cx="1181" cy="61" r="9.3" fill="url(#lens)" stroke="#8ab0e0" stroke-width="0.5"/>
<path d="M1181 49 L1184 53 H1182 V69 H1184 L1181 73 L1178 69 H1180 V53 H1178 Z M1169 61 L1173 58 V60 H1189 V58 L1193 61 L1189 64 V62 H1173 V64 Z" fill="#fff" stroke="#6a9ad8" stroke-width="0.5"/></g>
<rect x="1211" y="53" width="2" height="2" fill="#808080"/><rect x="1211" y="59" width="2" height="2" fill="#808080"/><rect x="1211" y="65" width="2" height="2" fill="#808080"/><rect x="1211" y="71" width="2" height="2" fill="#808080"/>
<line x1="1224" y1="71" x2="1245" y2="57" stroke="#000" stroke-width="1"/><circle cx="1223.5" cy="71.5" r="2" fill="#f00"/><circle cx="1245" cy="57" r="2" fill="#f00"/>
<line x1="1265" y1="70" x2="1292" y2="54" stroke="#000" stroke-width="1"/><line x1="1265" y1="70" x2="1292" y2="70" stroke="#3030ff" stroke-width="1"/><path d="M1280 70 A13 13 0 0 0 1278.5 62.5" fill="none" stroke="#e04040" stroke-width="1"/><circle cx="1265" cy="70" r="2" fill="#f00"/>
<line x1="1306" y1="63.5" x2="1327" y2="63.5" stroke="#000" stroke-width="1"/><circle cx="1306.5" cy="63.5" r="2" fill="#f00"/>
<line x1="1356.5" y1="53" x2="1356.5" y2="73" stroke="#000" stroke-width="1"/><circle cx="1356.5" cy="73.5" r="2" fill="#f00"/>
<rect x="1382" y="47" width="1" height="1" fill="#8a8a8a"/><rect x="1382" y="50" width="1" height="1" fill="#8a8a8a"/><rect x="1382" y="53" width="1" height="1" fill="#8a8a8a"/><rect x="1382" y="56" width="1" height="1" fill="#8a8a8a"/><rect x="1382" y="59" width="1" height="1" fill="#8a8a8a"/><rect x="1382" y="62" width="1" height="1" fill="#8a8a8a"/><rect x="1382" y="65" width="1" height="1" fill="#8a8a8a"/><rect x="1382" y="68" width="1" height="1" fill="#8a8a8a"/><rect x="1382" y="71" width="1" height="1" fill="#8a8a8a"/><rect x="1382" y="74" width="1" height="1" fill="#8a8a8a"/><rect x="1382" y="77" width="1" height="1" fill="#8a8a8a"/><rect x="1382" y="80" width="1" height="1" fill="#8a8a8a"/>
<path d="M1410 53 L1396 73.5 H1420" fill="none" stroke="#f00" stroke-width="1"/><line x1="1396" y1="73.5" x2="1418" y2="61" stroke="#000" stroke-width="1"/><path d="M1407 59 A14 14 0 0 1 1414 73" fill="none" stroke="#4040ff" stroke-width="1"/><path d="M1411 57 h4 M1411 59 h4 M1417 66.5 h4 M1417 68.5 h4" stroke="#0000ff" stroke-width="1.2"/>
<rect x="1433" y="47" width="1" height="1" fill="#8a8a8a"/><rect x="1433" y="50" width="1" height="1" fill="#8a8a8a"/><rect x="1433" y="53" width="1" height="1" fill="#8a8a8a"/><rect x="1433" y="56" width="1" height="1" fill="#8a8a8a"/><rect x="1433" y="59" width="1" height="1" fill="#8a8a8a"/><rect x="1433" y="62" width="1" height="1" fill="#8a8a8a"/><rect x="1433" y="65" width="1" height="1" fill="#8a8a8a"/><rect x="1433" y="68" width="1" height="1" fill="#8a8a8a"/><rect x="1433" y="71" width="1" height="1" fill="#8a8a8a"/><rect x="1433" y="74" width="1" height="1" fill="#8a8a8a"/><rect x="1433" y="77" width="1" height="1" fill="#8a8a8a"/><rect x="1433" y="80" width="1" height="1" fill="#8a8a8a"/>
<line x1="1446" y1="65" x2="1467" y2="55" stroke="#f00" stroke-width="1"/><line x1="1451" y1="75" x2="1472" y2="65" stroke="#000" stroke-width="1"/><line x1="1454" y1="61" x2="1458" y2="71" stroke="#5050ff" stroke-width="1"/>
<line x1="1487" y1="65" x2="1508" y2="55" stroke="#f00" stroke-width="1"/><line x1="1492" y1="75" x2="1513" y2="65" stroke="#000" stroke-width="1"/><circle cx="1498" cy="71.5" r="2" fill="#f00"/>
<rect x="1525" y="47" width="1" height="1" fill="#8a8a8a"/><rect x="1525" y="50" width="1" height="1" fill="#8a8a8a"/><rect x="1525" y="53" width="1" height="1" fill="#8a8a8a"/><rect x="1525" y="56" width="1" height="1" fill="#8a8a8a"/><rect x="1525" y="59" width="1" height="1" fill="#8a8a8a"/><rect x="1525" y="62" width="1" height="1" fill="#8a8a8a"/><rect x="1525" y="65" width="1" height="1" fill="#8a8a8a"/><rect x="1525" y="68" width="1" height="1" fill="#8a8a8a"/><rect x="1525" y="71" width="1" height="1" fill="#8a8a8a"/><rect x="1525" y="74" width="1" height="1" fill="#8a8a8a"/><rect x="1525" y="77" width="1" height="1" fill="#8a8a8a"/><rect x="1525" y="80" width="1" height="1" fill="#8a8a8a"/>
<circle cx="1545" cy="67" r="7" fill="none" stroke="#f00" stroke-width="1"/><line x1="1544" y1="60" x2="1562" y2="56" stroke="#000" stroke-width="1"/><circle cx="1562" cy="56" r="2" fill="#f00"/>
<circle cx="1586" cy="67" r="7" fill="none" stroke="#f00" stroke-width="1"/><line x1="1585" y1="60" x2="1600" y2="57" stroke="#000" stroke-width="1"/><circle cx="1603" cy="58" r="3" fill="none" stroke="#f00" stroke-width="1"/>
<circle cx="1629" cy="69" r="7" fill="none" stroke="#f00" stroke-width="1"/><line x1="1626" y1="62" x2="1642" y2="54" stroke="#000" stroke-width="1"/><line x1="1637" y1="49" x2="1646" y2="64" stroke="#f00" stroke-width="1"/>
<rect x="1658" y="47" width="1" height="1" fill="#8a8a8a"/><rect x="1658" y="50" width="1" height="1" fill="#8a8a8a"/><rect x="1658" y="53" width="1" height="1" fill="#8a8a8a"/><rect x="1658" y="56" width="1" height="1" fill="#8a8a8a"/><rect x="1658" y="59" width="1" height="1" fill="#8a8a8a"/><rect x="1658" y="62" width="1" height="1" fill="#8a8a8a"/><rect x="1658" y="65" width="1" height="1" fill="#8a8a8a"/><rect x="1658" y="68" width="1" height="1" fill="#8a8a8a"/><rect x="1658" y="71" width="1" height="1" fill="#8a8a8a"/><rect x="1658" y="74" width="1" height="1" fill="#8a8a8a"/><rect x="1658" y="77" width="1" height="1" fill="#8a8a8a"/><rect x="1658" y="80" width="1" height="1" fill="#8a8a8a"/>
<line x1="1671" y1="75" x2="1697" y2="53" stroke="#000" stroke-width="1"/><line x1="1681" y1="75" x2="1687" y2="53" stroke="#000" stroke-width="1"/><circle cx="1684" cy="64" r="2" fill="#f00"/>
<line x1="1712" y1="75" x2="1738" y2="53" stroke="#000" stroke-width="1"/><line x1="1718" y1="57" x2="1730" y2="70" stroke="#000" stroke-width="1"/><circle cx="1725" cy="64" r="2" fill="#f00"/>
<rect x="1750" y="47" width="1" height="1" fill="#8a8a8a"/><rect x="1750" y="50" width="1" height="1" fill="#8a8a8a"/><rect x="1750" y="53" width="1" height="1" fill="#8a8a8a"/><rect x="1750" y="56" width="1" height="1" fill="#8a8a8a"/><rect x="1750" y="59" width="1" height="1" fill="#8a8a8a"/><rect x="1750" y="62" width="1" height="1" fill="#8a8a8a"/><rect x="1750" y="65" width="1" height="1" fill="#8a8a8a"/><rect x="1750" y="68" width="1" height="1" fill="#8a8a8a"/><rect x="1750" y="71" width="1" height="1" fill="#8a8a8a"/><rect x="1750" y="74" width="1" height="1" fill="#8a8a8a"/><rect x="1750" y="77" width="1" height="1" fill="#8a8a8a"/><rect x="1750" y="80" width="1" height="1" fill="#8a8a8a"/>
<path d="M1762 60 Q1770 48 1774 54 Q1777 60 1769 68 Q1766 73 1771 70 Q1778 60 1782 63 Q1784 68 1781 72 Q1782 75 1786 74 L1790 77" fill="none" stroke="#000" stroke-width="1.2"/><rect x="11" y="92" width="2" height="2" fill="#808080"/><rect x="11" y="98" width="2" height="2" fill="#808080"/><rect x="11" y="104" width="2" height="2" fill="#808080"/><rect x="11" y="110" width="2" height="2" fill="#808080"/>
<rect x="18.5" y="88.5" width="44" height="31" rx="5" fill="none" stroke="#8a8a8a" stroke-width="1.6"/>
<path d="M29 92 L36 113 H29 Z" fill="none" stroke="#444" stroke-width="1"/>
<path d="M43 92 L51 113 H43 Z" fill="none" stroke="#ff3030" stroke-width="1"/>
<path d="M32 101.5 H40 V99.5 L44 103 L40 106.5 V104.5 H32 Z" fill="#fff" stroke="#5050ff" stroke-width="0.9"/>
<rect x="72" y="86" width="1" height="1" fill="#8a8a8a"/><rect x="72" y="89" width="1" height="1" fill="#8a8a8a"/><rect x="72" y="92" width="1" height="1" fill="#8a8a8a"/><rect x="72" y="95" width="1" height="1" fill="#8a8a8a"/><rect x="72" y="98" width="1" height="1" fill="#8a8a8a"/><rect x="72" y="101" width="1" height="1" fill="#8a8a8a"/><rect x="72" y="104" width="1" height="1" fill="#8a8a8a"/><rect x="72" y="107" width="1" height="1" fill="#8a8a8a"/><rect x="72" y="110" width="1" height="1" fill="#8a8a8a"/><rect x="72" y="113" width="1" height="1" fill="#8a8a8a"/><rect x="72" y="116" width="1" height="1" fill="#8a8a8a"/><rect x="72" y="119" width="1" height="1" fill="#8a8a8a"/>
<rect x="86" y="96" width="13.5" height="14" rx="2.5" fill="#8e8e92"/>
<path d="M89 103.5 L91.8 106.5 L97 99" fill="none" stroke="#fff" stroke-width="1.6"/>
<rect x="151" y="86" width="1" height="1" fill="#8a8a8a"/><rect x="151" y="89" width="1" height="1" fill="#8a8a8a"/><rect x="151" y="92" width="1" height="1" fill="#8a8a8a"/><rect x="151" y="95" width="1" height="1" fill="#8a8a8a"/><rect x="151" y="98" width="1" height="1" fill="#8a8a8a"/><rect x="151" y="101" width="1" height="1" fill="#8a8a8a"/><rect x="151" y="104" width="1" height="1" fill="#8a8a8a"/><rect x="151" y="107" width="1" height="1" fill="#8a8a8a"/><rect x="151" y="110" width="1" height="1" fill="#8a8a8a"/><rect x="151" y="113" width="1" height="1" fill="#8a8a8a"/><rect x="151" y="116" width="1" height="1" fill="#8a8a8a"/><rect x="151" y="119" width="1" height="1" fill="#8a8a8a"/>
<rect x="363" y="86" width="1" height="1" fill="#8a8a8a"/><rect x="363" y="89" width="1" height="1" fill="#8a8a8a"/><rect x="363" y="92" width="1" height="1" fill="#8a8a8a"/><rect x="363" y="95" width="1" height="1" fill="#8a8a8a"/><rect x="363" y="98" width="1" height="1" fill="#8a8a8a"/><rect x="363" y="101" width="1" height="1" fill="#8a8a8a"/><rect x="363" y="104" width="1" height="1" fill="#8a8a8a"/><rect x="363" y="107" width="1" height="1" fill="#8a8a8a"/><rect x="363" y="110" width="1" height="1" fill="#8a8a8a"/><rect x="363" y="113" width="1" height="1" fill="#8a8a8a"/><rect x="363" y="116" width="1" height="1" fill="#8a8a8a"/><rect x="363" y="119" width="1" height="1" fill="#8a8a8a"/>
<rect x="378.5" y="96.5" width="13" height="13" rx="2.5" fill="#fff" stroke="#b0b0b0"/>
<rect x="597" y="86" width="1" height="1" fill="#8a8a8a"/><rect x="597" y="89" width="1" height="1" fill="#8a8a8a"/><rect x="597" y="92" width="1" height="1" fill="#8a8a8a"/><rect x="597" y="95" width="1" height="1" fill="#8a8a8a"/><rect x="597" y="98" width="1" height="1" fill="#8a8a8a"/><rect x="597" y="101" width="1" height="1" fill="#8a8a8a"/><rect x="597" y="104" width="1" height="1" fill="#8a8a8a"/><rect x="597" y="107" width="1" height="1" fill="#8a8a8a"/><rect x="597" y="110" width="1" height="1" fill="#8a8a8a"/><rect x="597" y="113" width="1" height="1" fill="#8a8a8a"/><rect x="597" y="116" width="1" height="1" fill="#8a8a8a"/><rect x="597" y="119" width="1" height="1" fill="#8a8a8a"/>
<rect x="609" y="92" width="2" height="2" fill="#808080"/><rect x="609" y="98" width="2" height="2" fill="#808080"/><rect x="609" y="104" width="2" height="2" fill="#808080"/><rect x="609" y="110" width="2" height="2" fill="#808080"/>
<g transform="translate(1200.5,92.5) scale(0.78,0.84) translate(-380,-52)"><path d="M380 55.5 L380 69.5 L393 69.5 L388.5 64.5 Q393 58.5 397.5 58.5 Q402.5 59 402.5 65 Q402 72.5 392 74.8 L392.5 76.5 Q408 75.5 408 62.5 Q407 52 397 52 Q390 52 384 60 Z" fill="#fbd9a0" stroke="#e0a040" stroke-width="1.2"/></g>
<rect x="1239" y="92" width="2" height="2" fill="#808080"/><rect x="1239" y="98" width="2" height="2" fill="#808080"/><rect x="1239" y="104" width="2" height="2" fill="#808080"/><rect x="1239" y="110" width="2" height="2" fill="#808080"/>
<path d="M1250 96 L1262 93 L1270 105 L1262 114 Q1257 111 1252 108 Z" fill="#f0c030" stroke="#c89010" stroke-width="0.8"/>
<line x1="1248" y1="88" x2="1254" y2="97" stroke="#666" stroke-width="1.5"/>
<path d="M1259 108 L1274 89 L1277 91 L1262 110 L1258 111 Z" fill="#f0b030" stroke="#7a4a10" stroke-width="0.7"/>
<path d="M1274 89 L1276 87 L1278 89 L1277 91 Z" fill="#e03030"/>
<path d="M1290 96 L1302 93 L1308 104 L1300 114 Q1295 111 1292 108 Z" fill="#f0c030" stroke="#c89010" stroke-width="0.8"/>
<line x1="1288" y1="88" x2="1294" y2="97" stroke="#666" stroke-width="1.5"/>
<g transform="translate(1299.5,101) scale(0.66,0.64) translate(-380,-52)"><path d="M380 55.5 L380 69.5 L393 69.5 L388.5 64.5 Q393 58.5 397.5 58.5 Q402.5 59 402.5 65 Q402 72.5 392 74.8 L392.5 76.5 Q408 75.5 408 62.5 Q407 52 397 52 Q390 52 384 60 Z" fill="#c8d0fa" stroke="#4050c0" stroke-width="1.4"/></g>
<rect x="1330" y="92" width="2" height="2" fill="#808080"/><rect x="1330" y="98" width="2" height="2" fill="#808080"/><rect x="1330" y="104" width="2" height="2" fill="#808080"/><rect x="1330" y="110" width="2" height="2" fill="#808080"/></svg>
<div class="a tb" style="top:84px;height:40px;border-bottom:2px solid #a8a8a8"></div>
<div class="a" style="left:105px;top:96px;font-size:13px;letter-spacing:0.15px">Copia</div>
<div class="a" style="left:167px;top:96px;font-size:13px;letter-spacing:0.2px">Numero di copie:</div>
<div class="a" style="left:282px;top:93px;width:75px;height:20px;background:#fff;border:1px solid #c6c6c6;border-top-color:#aaa;font-size:13px;padding:2px 0 0 3px">0</div>
<div class="a" style="left:397px;top:96px;font-size:13px;letter-spacing:0.15px">Usa livello e gli attributi corrente</div>
<div class="combo" style="left:617px;top:92px;width:157px;height:21px;font-size:13px;padding-left:27px;line-height:17px">Da livello<span class="a" style="left:9px;top:3px;width:16px;height:11px;border:1.5px solid #000"></span><i style="height:21px"></i></div>
<div class="combo" style="left:783px;top:92px;width:149px;height:21px;font-size:13px;padding-left:29px;line-height:17px">Da livello<span class="a" style="left:9px;top:8px;width:16px;height:1.5px;background:#000"></span><i style="height:21px"></i></div>
<div class="combo" style="left:942px;top:92px;width:245px;height:21px;font-size:13px;padding-left:8px;line-height:17px">Da livello<i style="height:21px"></i></div>



<div class="a" style="left:4px;top:122px;width:42px;height:916px;background:linear-gradient(90deg,#e2e2e2,#cdcdcd);border-right:2px solid #9d9d9d"></div>
<div class="a" style="left:11px;top:130px;width:2px;height:2px;background:#8a8a8a"></div><div class="a" style="left:17px;top:130px;width:2px;height:2px;background:#8a8a8a"></div><div class="a" style="left:23px;top:130px;width:2px;height:2px;background:#8a8a8a"></div><div class="a" style="left:29px;top:130px;width:2px;height:2px;background:#8a8a8a"></div><div class="a" style="left:35px;top:130px;width:2px;height:2px;background:#8a8a8a"></div>
<div class="a" style="left:5px;top:164px;width:39px;height:11px;background:linear-gradient(90deg,#ececec,#c6c6c6);border-top:1px solid #b4b4b4"></div>
<div class="a" style="left:5px;top:254px;width:39px;height:9px;background:linear-gradient(90deg,#ececec,#c6c6c6);border-top:1px solid #b4b4b4"></div>
<div class="a" style="left:5px;top:502px;width:39px;height:9px;background:linear-gradient(90deg,#ececec,#c6c6c6);border-top:1px solid #b4b4b4"></div>
<div class="a" style="left:5px;top:590px;width:39px;height:9px;background:linear-gradient(90deg,#ececec,#c6c6c6);border-top:1px solid #b4b4b4"></div>
<div class="a" style="left:5px;top:678px;width:39px;height:9px;background:linear-gradient(90deg,#ececec,#c6c6c6);border-top:1px solid #b4b4b4"></div>
<div class="a" style="left:5px;top:766px;width:39px;height:9px;background:linear-gradient(90deg,#ececec,#c6c6c6);border-top:1px solid #b4b4b4"></div>
<div class="a" style="left:5px;top:814px;width:39px;height:9px;background:linear-gradient(90deg,#ececec,#c6c6c6);border-top:1px solid #b4b4b4"></div>
<div class="a" style="left:5px;top:902px;width:39px;height:9px;background:linear-gradient(90deg,#ececec,#c6c6c6);border-top:1px solid #b4b4b4"></div>
<div class="a" style="left:5px;top:990px;width:39px;height:9px;background:linear-gradient(90deg,#ececec,#c6c6c6);border-top:1px solid #b4b4b4"></div>
<div class="a" style="left:5px;top:135px;width:39px;height:29px;background:linear-gradient(#f7f7f7,#e3e3e3);border:1px solid #b3b3b3;border-top-color:#c4c4c4"></div>
<div class="a" style="left:5px;top:175px;width:39px;height:40px;background:linear-gradient(#f7f7f7,#e3e3e3);border:1px solid #b3b3b3;border-top-color:#c4c4c4"></div>
<div class="a" style="left:5px;top:215px;width:39px;height:40px;background:linear-gradient(#f7f7f7,#e3e3e3);border:1px solid #b3b3b3;border-top-color:#c4c4c4"></div>
<div class="a" style="left:5px;top:263px;width:39px;height:40px;background:linear-gradient(#f7f7f7,#e3e3e3);border:1px solid #b3b3b3;border-top-color:#c4c4c4"></div>
<div class="a" style="left:5px;top:303px;width:39px;height:40px;background:linear-gradient(#f7f7f7,#e3e3e3);border:1px solid #b3b3b3;border-top-color:#c4c4c4"></div>
<div class="a" style="left:5px;top:343px;width:39px;height:40px;background:linear-gradient(#f7f7f7,#e3e3e3);border:1px solid #b3b3b3;border-top-color:#c4c4c4"></div>
<div class="a" style="left:5px;top:383px;width:39px;height:40px;background:linear-gradient(#f7f7f7,#e3e3e3);border:1px solid #b3b3b3;border-top-color:#c4c4c4"></div>
<div class="a" style="left:5px;top:423px;width:39px;height:40px;background:linear-gradient(#f7f7f7,#e3e3e3);border:1px solid #b3b3b3;border-top-color:#c4c4c4"></div>
<div class="a" style="left:5px;top:462px;width:39px;height:40px;background:linear-gradient(#f7f7f7,#e3e3e3);border:1px solid #b3b3b3;border-top-color:#c4c4c4"></div>
<div class="a" style="left:5px;top:511px;width:39px;height:40px;background:linear-gradient(#f7f7f7,#e3e3e3);border:1px solid #b3b3b3;border-top-color:#c4c4c4"></div>
<div class="a" style="left:5px;top:551px;width:39px;height:40px;background:linear-gradient(#f7f7f7,#e3e3e3);border:1px solid #b3b3b3;border-top-color:#c4c4c4"></div>
<div class="a" style="left:5px;top:599px;width:39px;height:40px;background:linear-gradient(#f7f7f7,#e3e3e3);border:1px solid #b3b3b3;border-top-color:#c4c4c4"></div>
<div class="a" style="left:5px;top:639px;width:39px;height:40px;background:linear-gradient(#f7f7f7,#e3e3e3);border:1px solid #b3b3b3;border-top-color:#c4c4c4"></div>
<div class="a" style="left:5px;top:687px;width:39px;height:40px;background:linear-gradient(#f7f7f7,#e3e3e3);border:1px solid #b3b3b3;border-top-color:#c4c4c4"></div>
<div class="a" style="left:5px;top:727px;width:39px;height:40px;background:linear-gradient(#f7f7f7,#e3e3e3);border:1px solid #b3b3b3;border-top-color:#c4c4c4"></div>
<div class="a" style="left:5px;top:775px;width:39px;height:40px;background:linear-gradient(#b9b9b9,#b4b4b4);border:1px solid #b3b3b3;border-top-color:#c4c4c4"></div>
<div class="a" style="left:5px;top:823px;width:39px;height:40px;background:linear-gradient(#f7f7f7,#e3e3e3);border:1px solid #b3b3b3;border-top-color:#c4c4c4"></div>
<div class="a" style="left:5px;top:863px;width:39px;height:40px;background:linear-gradient(#f7f7f7,#e3e3e3);border:1px solid #b3b3b3;border-top-color:#c4c4c4"></div>
<div class="a" style="left:5px;top:911px;width:39px;height:40px;background:linear-gradient(#f7f7f7,#e3e3e3);border:1px solid #b3b3b3;border-top-color:#c4c4c4"></div>
<div class="a" style="left:5px;top:951px;width:39px;height:40px;background:linear-gradient(#f7f7f7,#e3e3e3);border:1px solid #b3b3b3;border-top-color:#c4c4c4"></div>
<div class="a" style="left:5px;top:999px;width:39px;height:40px;background:linear-gradient(#f7f7f7,#e3e3e3);border:1px solid #b3b3b3;border-top-color:#c4c4c4"></div>
<div class="a" style="left:11px;top:786px;font-size:14px;color:#222">Auto</div><svg width="1920" height="1080" style="left:0;top:0;z-index:5"><path d="M20 150 L29 145 V155 Z" fill="#000"/>
<path d="M19.5 194.5 H29.5 M24.5 189.5 V199.5" stroke="#000" stroke-width="1"/>
<circle cx="13" cy="223" r="2" fill="#ff0000"/><circle cx="13" cy="231" r="2" fill="#ff0000"/><circle cx="13" cy="239" r="2" fill="#ff0000"/><circle cx="13" cy="247" r="2" fill="#ff0000"/><circle cx="21" cy="223" r="2" fill="#ff0000"/><circle cx="21" cy="231" r="2" fill="#ff0000"/><circle cx="21" cy="239" r="2" fill="#ff0000"/><circle cx="21" cy="247" r="2" fill="#ff0000"/><circle cx="29" cy="223" r="2" fill="#ff0000"/><circle cx="29" cy="231" r="2" fill="#ff0000"/><circle cx="29" cy="239" r="2" fill="#ff0000"/><circle cx="29" cy="247" r="2" fill="#ff0000"/><circle cx="37" cy="223" r="2" fill="#ff0000"/><circle cx="37" cy="231" r="2" fill="#ff0000"/><circle cx="37" cy="239" r="2" fill="#ff0000"/><circle cx="37" cy="247" r="2" fill="#ff0000"/>
<path d="M22.5 271 Q25 283 37 285" fill="none" stroke="#000" stroke-width="1"/><line x1="13" y1="282" x2="37" y2="295" stroke="#000" stroke-width="1"/>
<circle cx="22.5" cy="271" r="2.2" fill="#ff0000"/><circle cx="37" cy="285" r="2.2" fill="#ff0000"/><circle cx="13" cy="282" r="2.2" fill="#ff0000"/><circle cx="37" cy="295" r="2.2" fill="#ff0000"/>
<path d="M13 323.5 L37.5 310" fill="none" stroke="#000" stroke-width="1"/><path d="M22.5 334.5 L26 324.5 L37.5 320.5" fill="none" stroke="#000" stroke-width="1"/>
<circle cx="13" cy="323.5" r="2.2" fill="#ff0000"/><circle cx="19" cy="320.5" r="2.2" fill="#ff0000"/><circle cx="25" cy="317.5" r="2.2" fill="#ff0000"/><circle cx="31" cy="313.5" r="2.2" fill="#ff0000"/><circle cx="37.5" cy="310" r="2.2" fill="#ff0000"/><circle cx="22.5" cy="334.5" r="2.2" fill="#ff0000"/><circle cx="24" cy="329" r="2.2" fill="#ff0000"/><circle cx="26.5" cy="324.5" r="2.2" fill="#ff0000"/><circle cx="31.5" cy="322" r="2.2" fill="#ff0000"/><circle cx="37" cy="320.5" r="2.2" fill="#ff0000"/>
<line x1="15" y1="351" x2="26.5" y2="364.5" stroke="#000" stroke-width="1"/><path d="M22.5 374.5 Q24 363 37 360" fill="none" stroke="#000" stroke-width="1"/><path d="M23 358 Q27 355 31 359" fill="none" stroke="#777" stroke-width="0.6"/><circle cx="26.5" cy="364.5" r="2.2" fill="#ff0000"/>
<circle cx="30" cy="400" r="7" fill="none" stroke="#000" stroke-width="1"/><line x1="13.5" y1="412.5" x2="22.5" y2="396.5" stroke="#000" stroke-width="1"/><circle cx="22.5" cy="396.5" r="2.2" fill="#ff0000"/>
<line x1="12" y1="444" x2="37" y2="431" stroke="#000" stroke-width="1"/><path d="M22 454 Q23 442 37 440" fill="none" stroke="#000" stroke-width="1.2"/><circle cx="24.5" cy="437.5" r="2.2" fill="#ff0000"/><circle cx="36.5" cy="454.5" r="2.2" fill="#ff0000"/>
<circle cx="25" cy="483" r="11.5" fill="none" stroke="#000" stroke-width="1.2"/><circle cx="25" cy="471.5" r="2.2" fill="#ff0000"/><circle cx="25" cy="494.5" r="2.2" fill="#ff0000"/><circle cx="13.5" cy="483" r="2.2" fill="#ff0000"/><circle cx="36.5" cy="483" r="2.2" fill="#ff0000"/><circle cx="25" cy="483" r="2.2" fill="#ff0000"/>
<line x1="13" y1="531.5" x2="37" y2="518.5" stroke="#000" stroke-width="1"/><path d="M22.5 542 Q23 531 37.5 528" fill="none" stroke="#000" stroke-width="1.2"/><circle cx="25" cy="525" r="2.2" fill="#ff0000"/><circle cx="26.5" cy="532" r="2.2" fill="#ff0000"/>
<rect x="11.5" y="559.5" width="27" height="23" fill="none" stroke="#000" stroke-width="1.2"/><line x1="14" y1="580" x2="36" y2="562" stroke="#555" stroke-width="0.6" stroke-dasharray="2 2"/><circle cx="25" cy="571" r="2.2" fill="#ff0000"/>
<line x1="14" y1="620" x2="37.5" y2="607" stroke="#000" stroke-width="1"/><path d="M23 630 Q24 621 37.5 615.5" fill="none" stroke="#000" stroke-width="1"/><path d="M13 614 L19 611 M12.5 616 L18 613" stroke="#000" stroke-width="1.2"/><path d="M27 630 V625 M25 627 L27 624 L29 627" stroke="#000" stroke-width="1"/><circle cx="22" cy="615" r="2.2" fill="#ff0000"/><circle cx="26" cy="621" r="2.2" fill="#ff0000"/>
<line x1="21" y1="655" x2="37" y2="646" stroke="#000" stroke-width="1" stroke-dasharray="2 2"/><path d="M12 657 L18 654 M12 660 L17 657" stroke="#000" stroke-width="1.2"/><circle cx="21.5" cy="655" r="2.2" fill="#ff0000"/><circle cx="37" cy="646.5" r="1.4" fill="#000"/>
<text x="34" y="663" font-size="11" font-family="Liberation Sans">2</text><text x="11" y="673" font-size="11" font-family="Liberation Sans">1</text>
<line x1="11" y1="703" x2="39" y2="713" stroke="#000" stroke-width="1.2"/><line x1="32" y1="693" x2="25" y2="721" stroke="#000" stroke-width="1.2"/><circle cx="28" cy="709.5" r="2.2" fill="#ff0000"/>
<line x1="14" y1="748" x2="26" y2="752" stroke="#000" stroke-width="1.2"/><line x1="36" y1="737" x2="32" y2="751" stroke="#000" stroke-width="1.2"/><circle cx="31.5" cy="754" r="2.2" fill="#ff0000"/>
<path d="M21.5 829 V847.5 H39.5" fill="none" stroke="#000" stroke-width="1"/><circle cx="36" cy="831.5" r="2" fill="#ff0000"/>
<text x="11" y="839" font-size="12" font-family="Liberation Sans">y</text><text x="32" y="857" font-size="12" font-family="Liberation Sans">x</text>
<path d="M11.5 893 L30 874 Q39 882 38 893 Z" fill="none" stroke="#000" stroke-width="1"/><circle cx="30" cy="874.5" r="2.2" fill="#ff0000"/>
<text x="15" y="885" font-size="11" font-family="Liberation Sans">r</text><text x="27" y="892" font-size="11" font-family="Liberation Sans">a</text>
<path d="M15.5 921.5 H34 M15.5 921.5 V940" stroke="#000" stroke-width="0.7" stroke-dasharray="1 1.5"/><circle cx="15.5" cy="921.5" r="2.4" fill="#ff0000"/><circle cx="34" cy="921.5" r="1.4" fill="#000"/><circle cx="15.5" cy="940" r="1.4" fill="#000"/>
<text x="32" y="934" font-size="11" font-family="Liberation Sans">2</text><text x="19" y="944" font-size="11" font-family="Liberation Sans">1</text>
<path d="M15.5 980 H34 M34 961 V980" stroke="#000" stroke-width="0.7" stroke-dasharray="1 1.5"/><circle cx="34" cy="980" r="2.4" fill="#ff0000"/><circle cx="34" cy="961.5" r="1.4" fill="#000"/><circle cx="15.5" cy="980" r="1.4" fill="#000"/>
<text x="26" y="969" font-size="11" font-family="Liberation Sans">2</text><text x="12" y="976" font-size="11" font-family="Liberation Sans">1</text>
<path d="M13 1008 H35 V1023 H26 L21 1028 H13 Z" fill="none" stroke="#f0a0a0" stroke-width="0.8"/><circle cx="21" cy="1015" r="4.5" fill="none" stroke="#f0a0a0" stroke-width="0.8"/><path d="M25 1025 L34 1015 V1025 Z" fill="none" stroke="#f0a0a0" stroke-width="0.8"/><circle cx="25" cy="1020" r="2" fill="#f06060"/></svg>

<div id="tabbar" class="a"><span class="a" style="left:681px;top:5px;font-size:11.5px">* test.dwg</span></div>
<div id="canvas" class="a">
<svg width="1398" height="786" style="left:0;top:0">
<g fill="#ebebeb">
<rect x="304" y="0" width="1" height="786"/>
<rect x="1035" y="0" width="1" height="786"/>
<rect x="0" y="575" width="1398" height="1"/>
</g><g fill="#aaaaaa">
<rect x="11" y="722" width="1" height="1"/>
<rect x="11" y="649" width="1" height="1"/>
<rect x="11" y="576" width="1" height="1"/>
<rect x="11" y="503" width="1" height="1"/>
<rect x="11" y="430" width="1" height="1"/>
<rect x="11" y="356" width="1" height="1"/>
<rect x="11" y="283" width="1" height="1"/>
<rect x="11" y="210" width="1" height="1"/>
<rect x="11" y="137" width="1" height="1"/>
<rect x="11" y="64" width="1" height="1"/>
<rect x="84" y="722" width="1" height="1"/>
<rect x="84" y="649" width="1" height="1"/>
<rect x="84" y="576" width="1" height="1"/>
<rect x="84" y="503" width="1" height="1"/>
<rect x="84" y="430" width="1" height="1"/>
<rect x="84" y="356" width="1" height="1"/>
<rect x="84" y="283" width="1" height="1"/>
<rect x="84" y="210" width="1" height="1"/>
<rect x="84" y="137" width="1" height="1"/>
<rect x="84" y="64" width="1" height="1"/>
<rect x="158" y="722" width="1" height="1"/>
<rect x="158" y="649" width="1" height="1"/>
<rect x="158" y="576" width="1" height="1"/>
<rect x="158" y="503" width="1" height="1"/>
<rect x="158" y="430" width="1" height="1"/>
<rect x="158" y="356" width="1" height="1"/>
<rect x="158" y="283" width="1" height="1"/>
<rect x="158" y="210" width="1" height="1"/>
<rect x="158" y="137" width="1" height="1"/>
<rect x="158" y="64" width="1" height="1"/>
<rect x="231" y="722" width="1" height="1"/>
<rect x="231" y="649" width="1" height="1"/>
<rect x="231" y="576" width="1" height="1"/>
<rect x="231" y="503" width="1" height="1"/>
<rect x="231" y="430" width="1" height="1"/>
<rect x="231" y="356" width="1" height="1"/>
<rect x="231" y="283" width="1" height="1"/>
<rect x="231" y="210" width="1" height="1"/>
<rect x="231" y="137" width="1" height="1"/>
<rect x="231" y="64" width="1" height="1"/>
<rect x="304" y="722" width="1" height="1"/>
<rect x="304" y="649" width="1" height="1"/>
<rect x="304" y="576" width="1" height="1"/>
<rect x="304" y="503" width="1" height="1"/>
<rect x="304" y="430" width="1" height="1"/>
<rect x="304" y="356" width="1" height="1"/>
<rect x="304" y="283" width="1" height="1"/>
<rect x="304" y="210" width="1" height="1"/>
<rect x="304" y="137" width="1" height="1"/>
<rect x="304" y="64" width="1" height="1"/>
<rect x="377" y="722" width="1" height="1"/>
<rect x="377" y="649" width="1" height="1"/>
<rect x="377" y="576" width="1" height="1"/>
<rect x="377" y="503" width="1" height="1"/>
<rect x="377" y="430" width="1" height="1"/>
<rect x="377" y="356" width="1" height="1"/>
<rect x="377" y="283" width="1" height="1"/>
<rect x="377" y="210" width="1" height="1"/>
<rect x="377" y="137" width="1" height="1"/>
<rect x="377" y="64" width="1" height="1"/>
<rect x="450" y="722" width="1" height="1"/>
<rect x="450" y="649" width="1" height="1"/>
<rect x="450" y="576" width="1" height="1"/>
<rect x="450" y="503" width="1" height="1"/>
<rect x="450" y="430" width="1" height="1"/>
<rect x="450" y="356" width="1" height="1"/>
<rect x="450" y="283" width="1" height="1"/>
<rect x="450" y="210" width="1" height="1"/>
<rect x="450" y="137" width="1" height="1"/>
<rect x="450" y="64" width="1" height="1"/>
<rect x="523" y="722" width="1" height="1"/>
<rect x="523" y="649" width="1" height="1"/>
<rect x="523" y="576" width="1" height="1"/>
<rect x="523" y="503" width="1" height="1"/>
<rect x="523" y="430" width="1" height="1"/>
<rect x="523" y="356" width="1" height="1"/>
<rect x="523" y="283" width="1" height="1"/>
<rect x="523" y="210" width="1" height="1"/>
<rect x="523" y="137" width="1" height="1"/>
<rect x="523" y="64" width="1" height="1"/>
<rect x="597" y="722" width="1" height="1"/>
<rect x="597" y="649" width="1" height="1"/>
<rect x="597" y="576" width="1" height="1"/>
<rect x="597" y="503" width="1" height="1"/>
<rect x="597" y="430" width="1" height="1"/>
<rect x="597" y="356" width="1" height="1"/>
<rect x="597" y="283" width="1" height="1"/>
<rect x="597" y="210" width="1" height="1"/>
<rect x="597" y="137" width="1" height="1"/>
<rect x="597" y="64" width="1" height="1"/>
<rect x="670" y="722" width="1" height="1"/>
<rect x="670" y="649" width="1" height="1"/>
<rect x="670" y="576" width="1" height="1"/>
<rect x="670" y="503" width="1" height="1"/>
<rect x="670" y="430" width="1" height="1"/>
<rect x="670" y="356" width="1" height="1"/>
<rect x="670" y="283" width="1" height="1"/>
<rect x="670" y="210" width="1" height="1"/>
<rect x="670" y="137" width="1" height="1"/>
<rect x="670" y="64" width="1" height="1"/>
<rect x="743" y="722" width="1" height="1"/>
<rect x="743" y="649" width="1" height="1"/>
<rect x="743" y="576" width="1" height="1"/>
<rect x="743" y="503" width="1" height="1"/>
<rect x="743" y="430" width="1" height="1"/>
<rect x="743" y="356" width="1" height="1"/>
<rect x="743" y="283" width="1" height="1"/>
<rect x="743" y="210" width="1" height="1"/>
<rect x="743" y="137" width="1" height="1"/>
<rect x="743" y="64" width="1" height="1"/>
<rect x="816" y="722" width="1" height="1"/>
<rect x="816" y="649" width="1" height="1"/>
<rect x="816" y="576" width="1" height="1"/>
<rect x="816" y="503" width="1" height="1"/>
<rect x="816" y="430" width="1" height="1"/>
<rect x="816" y="356" width="1" height="1"/>
<rect x="816" y="283" width="1" height="1"/>
<rect x="816" y="210" width="1" height="1"/>
<rect x="816" y="137" width="1" height="1"/>
<rect x="816" y="64" width="1" height="1"/>
<rect x="889" y="722" width="1" height="1"/>
<rect x="889" y="649" width="1" height="1"/>
<rect x="889" y="576" width="1" height="1"/>
<rect x="889" y="503" width="1" height="1"/>
<rect x="889" y="430" width="1" height="1"/>
<rect x="889" y="356" width="1" height="1"/>
<rect x="889" y="283" width="1" height="1"/>
<rect x="889" y="210" width="1" height="1"/>
<rect x="889" y="137" width="1" height="1"/>
<rect x="889" y="64" width="1" height="1"/>
<rect x="962" y="722" width="1" height="1"/>
<rect x="962" y="649" width="1" height="1"/>
<rect x="962" y="576" width="1" height="1"/>
<rect x="962" y="503" width="1" height="1"/>
<rect x="962" y="430" width="1" height="1"/>
<rect x="962" y="356" width="1" height="1"/>
<rect x="962" y="283" width="1" height="1"/>
<rect x="962" y="210" width="1" height="1"/>
<rect x="962" y="137" width="1" height="1"/>
<rect x="962" y="64" width="1" height="1"/>
<rect x="1036" y="722" width="1" height="1"/>
<rect x="1036" y="649" width="1" height="1"/>
<rect x="1036" y="576" width="1" height="1"/>
<rect x="1036" y="503" width="1" height="1"/>
<rect x="1036" y="430" width="1" height="1"/>
<rect x="1036" y="356" width="1" height="1"/>
<rect x="1036" y="283" width="1" height="1"/>
<rect x="1036" y="210" width="1" height="1"/>
<rect x="1036" y="137" width="1" height="1"/>
<rect x="1036" y="64" width="1" height="1"/>
<rect x="1109" y="722" width="1" height="1"/>
<rect x="1109" y="649" width="1" height="1"/>
<rect x="1109" y="576" width="1" height="1"/>
<rect x="1109" y="503" width="1" height="1"/>
<rect x="1109" y="430" width="1" height="1"/>
<rect x="1109" y="356" width="1" height="1"/>
<rect x="1109" y="283" width="1" height="1"/>
<rect x="1109" y="210" width="1" height="1"/>
<rect x="1109" y="137" width="1" height="1"/>
<rect x="1109" y="64" width="1" height="1"/>
<rect x="1182" y="722" width="1" height="1"/>
<rect x="1182" y="649" width="1" height="1"/>
<rect x="1182" y="576" width="1" height="1"/>
<rect x="1182" y="503" width="1" height="1"/>
<rect x="1182" y="430" width="1" height="1"/>
<rect x="1182" y="356" width="1" height="1"/>
<rect x="1182" y="283" width="1" height="1"/>
<rect x="1182" y="210" width="1" height="1"/>
<rect x="1182" y="137" width="1" height="1"/>
<rect x="1182" y="64" width="1" height="1"/>
<rect x="1255" y="722" width="1" height="1"/>
<rect x="1255" y="649" width="1" height="1"/>
<rect x="1255" y="576" width="1" height="1"/>
<rect x="1255" y="503" width="1" height="1"/>
<rect x="1255" y="430" width="1" height="1"/>
<rect x="1255" y="356" width="1" height="1"/>
<rect x="1255" y="283" width="1" height="1"/>
<rect x="1255" y="210" width="1" height="1"/>
<rect x="1255" y="137" width="1" height="1"/>
<rect x="1255" y="64" width="1" height="1"/>
<rect x="1328" y="722" width="1" height="1"/>
<rect x="1328" y="649" width="1" height="1"/>
<rect x="1328" y="576" width="1" height="1"/>
<rect x="1328" y="503" width="1" height="1"/>
<rect x="1328" y="430" width="1" height="1"/>
<rect x="1328" y="356" width="1" height="1"/>
<rect x="1328" y="283" width="1" height="1"/>
<rect x="1328" y="210" width="1" height="1"/>
<rect x="1328" y="137" width="1" height="1"/>
<rect x="1328" y="64" width="1" height="1"/>
</g>
<g fill="none" stroke="#000" stroke-width="1.2">
<rect x="304.5" y="63.5" width="219" height="220"/>
<rect x="304.5" y="356.5" width="219" height="219"/>
</g>
<rect x="596.5" y="356.5" width="220.0" height="219.0" fill="none" stroke="#003c3c" stroke-width="3"/>
<rect x="596.5" y="356.5" width="220.0" height="219.0" fill="none" stroke="#561818" stroke-width="3" stroke-dasharray="7 8" stroke-dashoffset="-7"/>
</svg>
</div>
<div id="vscroll" class="a"><div class="thumb" style="left:3px;top:139px;width:8px;height:142px"></div></div>
<div id="hscroll" class="a"><div class="thumb" style="left:328px;top:3px;width:417px;height:8px"></div>
<span class="a" style="left:1341px;top:0;width:72px;height:15px;background:#ececec"></span><span class="a" style="left:1361px;top:0px;font-size:13px;white-space:nowrap;letter-spacing:0.2px">10 &lt; 100</span></div>

<div class="dtitle" style="left:46px;top:948px;width:1413px;text-indent:34px">Riga di comando
 <div class="cbtn" style="left:3px"></div><div class="cbtn" style="left:20px"></div>
</div>
<div id="cmdout" class="a">
 <div class="a" style="left:6px;top:3px"><i>Comando:</i> blockedit</div>
 <div class="a" style="left:6px;top:19px"><i>Comando:</i> move</div>
 <div class="a" style="left:1397px;top:0;width:16px;height:38px;background:#f8f8f8;border-left:1px solid #ececec"></div><div class="thumb" style="left:1401px;top:17px;width:8px;height:18px"></div>
</div>
<div id="cmdin" class="a">
 <span class="lbl" style="left:1px;top:6px">Punto obiettivo:</span>
 <div class="a" style="left:98px;top:5px;width:1289px;height:18px;background:#fff"></div>
 <div class="a" style="left:1386px;top:1px;width:27px;height:26px;background:#d2d2d2;border:1px solid #b8b8b8"></div>
</div>

<div class="a" style="left:1459px;top:122px;width:417px;height:456px;background:#ececec;border-left:1px solid #8f8f8f;border-right:1px solid #a5a5a5"></div>
<div class="a dtb" style="left:1460px;top:123px;width:415px;height:23px"><span class="a" style="left:184px;top:5px;font-size:11px;color:#111;white-space:nowrap;letter-spacing:-0.15px">Editor di proprietà</span></div>
<div class="a" style="left:1473px;top:162px;font-size:13px;letter-spacing:0.1px">Selezione:</div>
<div class="a cb" style="left:1542px;top:160px;width:303px;height:21px"><span class="a" style="left:8px;top:1px;font-size:13px;white-space:nowrap">Polilinea [1]</span><div class="a cba" style="width:17px;height:21px"></div></div>
<div class="a" style="left:1480px;top:190px;font-size:11px">Proprietà generali</div>
<div class="a grp" style="left:1476px;top:205px;width:369px;height:174px"></div>
<div class="a" style="right:329px;top:217px;font-size:13px;white-space:nowrap;text-align:right">Livello:</div>
<div class="a cb" style="left:1593px;top:216px;width:218px;height:20px"><span class="a" style="left:27px;top:0px;font-size:13px;white-space:nowrap">20 lin 04</span><span class="a" style="left:8px;top:2px;width:16px;height:10px;background:#000"></span><div class="a cba" style="width:17px;height:20px"></div></div>
<div class="a" style="left:1813px;top:212px;width:26px;height:26px;background:linear-gradient(#f8f8f8,#ececec);border:1px solid #c4c4c4"></div>
<div class="a" style="left:1820px;top:220px;width:13px;height:2px;background:#6a6a6a;box-shadow:0 4px 0 #6a6a6a,0 8px 0 #6a6a6a"></div>
<div class="a" style="right:329px;top:242px;font-size:13px;white-space:nowrap;text-align:right">Colore:</div>
<div class="a cb" style="left:1593px;top:241px;width:246px;height:20px"><span class="a" style="left:27px;top:0px;font-size:13px;white-space:nowrap">Da livello</span><span class="a" style="left:8px;top:2px;width:16px;height:10px;border:1.2px solid #000;background:#fff"></span><div class="a cba" style="width:17px;height:20px"></div></div>
<div class="a" style="right:329px;top:264px;font-size:13px;white-space:nowrap;text-align:right">Spessore di linea:</div>
<div class="a cb" style="left:1593px;top:263px;width:246px;height:20px"><span class="a" style="left:27px;top:0px;font-size:13px;white-space:nowrap">Da livello</span><span class="a" style="left:8px;top:7px;width:16px;height:1.3px;background:#000"></span><div class="a cba" style="width:17px;height:20px"></div></div>
<div class="a" style="right:329px;top:286px;font-size:13px;white-space:nowrap;text-align:right">Tipo di linea:</div>
<div class="a cb" style="left:1593px;top:285px;width:246px;height:20px"><span class="a" style="left:8px;top:0px;font-size:13px;white-space:nowrap">Da livello</span><div class="a cba" style="width:17px;height:20px"></div></div>
<div class="a" style="right:329px;top:308px;font-size:13px;white-space:nowrap;text-align:right">Scala del tipo:</div>
<div class="a fld" style="left:1593px;top:306px;width:246px;height:21px"><span class="a" style="left:2px;top:3px;color:#000">1</span></div>
<div class="a" style="right:329px;top:331px;font-size:13px;white-space:nowrap;text-align:right">Ordine di disegno:</div>
<div class="a fld" style="left:1593px;top:329px;width:246px;height:21px"><span class="a" style="left:2px;top:3px;color:#000">521</span></div>
<div class="a" style="right:329px;top:354px;font-size:13px;white-space:nowrap;text-align:right">Manico:</div>
<div class="a fld" style="left:1593px;top:352px;width:246px;height:21px"><span class="a" style="left:2px;top:3px;color:#7c7c7c">0x52b1</span></div>
<div class="a" style="left:1480px;top:388px;font-size:11px">Proprietà specifiche</div>
<div class="a grp" style="left:1476px;top:403px;width:369px;height:180px"></div>
<div class="a" style="right:327px;top:412px;font-size:13px;white-space:nowrap;text-align:right">Lunghezza:</div>
<div class="a fld" style="left:1595px;top:411px;width:244px;height:20px"><span class="a" style="left:2px;top:2px;color:#7c7c7c">120.00000000</span></div>
<div class="a" style="right:327px;top:435px;font-size:13px;white-space:nowrap;text-align:right">Lunghezza totale:</div>
<div class="a mb" style="left:1595px;top:433px;width:244px;height:21px">Mostra</div>
<div class="a" style="right:327px;top:459px;font-size:13px;white-space:nowrap;text-align:right">Area:</div>
<div class="a mb" style="left:1595px;top:457px;width:244px;height:21px">Mostra</div>
<div class="a" style="right:327px;top:483px;font-size:13px;white-space:nowrap;text-align:right">Area totale:</div>
<div class="a mb" style="left:1595px;top:481px;width:244px;height:21px">Mostra</div>
<div class="a" style="right:327px;top:507px;font-size:13px;white-space:nowrap;text-align:right">Modello polilinea:</div>
<div class="a cb" style="left:1595px;top:506px;width:244px;height:20px"><span class="a" style="left:8px;top:0px;font-size:13px;white-space:nowrap">Si</span><div class="a cba" style="width:17px;height:20px"></div></div>
<div class="a" style="right:327px;top:530px;font-size:13px;white-space:nowrap;text-align:right">Chiuso:</div>
<div class="a cb" style="left:1595px;top:528px;width:244px;height:20px"><span class="a" style="left:8px;top:0px;font-size:13px;white-space:nowrap">Si</span><div class="a cba" style="width:17px;height:20px"></div></div>
<div class="a" style="right:327px;top:551px;font-size:13px;white-space:nowrap;text-align:right">Larghezza globale:</div>
<div class="a fld" style="left:1595px;top:550px;width:244px;height:20px"><span class="a" style="left:2px;top:2px;color:#000">0.00000000</span></div>
<div class="a cb" style="left:1595px;top:573px;width:244px;height:20px"><span class="a" style="left:8px;top:0px;font-size:13px;white-space:nowrap"></span><div class="a cba" style="width:17px;height:20px"></div></div>
<div class="a" style="left:1460px;top:577px;width:416px;height:1px;background:#9a9a9a"></div>
<div class="a" style="left:1861px;top:146px;width:14px;height:431px;background:#f5f5f5;border-left:1px solid #ededed"></div>
<div class="a thumb" style="left:1864px;top:149px;width:8px;height:226px"></div><svg width="1920" height="1080" style="left:0;top:0;z-index:5"><circle cx="1469" cy="133" r="6.8" fill="#4b4b4b"/><path d="M1466 130 L1472 136 M1472 130 L1466 136" stroke="#fff" stroke-width="2"/><circle cx="1487" cy="133" r="6.8" fill="#4b4b4b"/><rect x="1484.5" y="129" width="6" height="5" fill="none" stroke="#fff" stroke-width="1.3"/><rect x="1482.5" y="131.5" width="6" height="5" fill="#4b4b4b" stroke="#fff" stroke-width="1.3"/></svg>



<div id="btb" class="a"></div>
<div class="a" style="left:1459px;top:578px;width:22px;height:460px;background:#ececec;border-left:1px solid #8f8f8f"></div>
<div class="a" style="left:1470px;top:578px;width:11px;height:36px;background:#dedede"></div>
<div class="a" style="left:1470px;top:1005px;width:11px;height:33px;background:#dcdcdc"></div>
<div class="a" style="left:1464px;top:613px;width:17px;height:115px;background:#fff;border:1px solid #cfcfcf;border-right:none;border-radius:6px 0 0 0"></div>
<div class="a" style="left:1464px;top:728px;width:17px;height:135px;background:linear-gradient(90deg,#a3a3a7,#98989c);"></div>
<div class="a" style="left:1464px;top:862px;width:17px;height:143px;background:#fff;border:1px solid #cfcfcf;border-right:none;border-radius:0 0 0 6px"></div>
<div class="a" style="left:1470.5px;top:669px;width:0;height:0"><span class="a" style="left:0;top:0;transform:translate(-50%,-50%) rotate(-90deg);white-space:nowrap;font-size:13px;color:#000;display:block">Elenco dei livelli</span></div>
<div class="a" style="left:1470.5px;top:795px;width:0;height:0"><span class="a" style="left:0;top:0;transform:translate(-50%,-50%) rotate(-90deg);white-space:nowrap;font-size:13px;color:#f4f4f4;display:block">Elenco dei blocchi</span></div>
<div class="a" style="left:1470.5px;top:934px;width:0;height:0"><span class="a" style="left:0;top:0;transform:translate(-50%,-50%) rotate(-90deg);white-space:nowrap;font-size:13px;color:#000;display:block">Navigatore di librerie</span></div>
<div class="a" style="left:1481px;top:578px;width:395px;height:460px;background:#fff;border-right:1px solid #a8a8a8"></div>
<div class="a dtb" style="left:1481px;top:578px;width:395px;height:23px"><span class="a" style="left:173px;top:5px;font-size:11px;color:#111;white-space:nowrap;letter-spacing:-0.15px">Elenco dei blocchi</span></div>
<div class="a" style="left:1481px;top:601px;width:395px;height:27px;background:linear-gradient(#f8f8f8,#e6e6e6);border-bottom:2px solid #ababab"></div>
<div class="a" style="left:1529px;top:602px;width:2px;height:25px;background:#cacaca;border-right:1px solid #f8f8f8"></div>
<div class="a" style="left:1579px;top:602px;width:2px;height:25px;background:#cacaca;border-right:1px solid #f8f8f8"></div>
<div class="a" style="left:1628px;top:602px;width:2px;height:25px;background:#cacaca;border-right:1px solid #f8f8f8"></div>
<div class="a" style="left:1678px;top:602px;width:2px;height:25px;background:#cacaca;border-right:1px solid #f8f8f8"></div>
<div class="a" style="left:1727px;top:602px;width:2px;height:25px;background:#cacaca;border-right:1px solid #f8f8f8"></div>
<div class="a" style="left:1776px;top:602px;width:2px;height:25px;background:#cacaca;border-right:1px solid #f8f8f8"></div>
<div class="a" style="left:1826px;top:602px;width:2px;height:25px;background:#cacaca;border-right:1px solid #f8f8f8"></div>
<div class="a" style="left:1481px;top:627px;width:394px;height:21px;background:#d5d5d5"></div>
<div class="a" style="left:1531px;top:631px;font-size:13px">Model (*Model_Space)</div>
<div class="a" style="left:1531px;top:651px;font-size:13px">Layout1 (*Paper_Space)</div>
<div class="a" style="left:1876px;top:122px;width:38px;height:916px;background:linear-gradient(90deg,#f2f2f2,#e2e2e2 60%,#c4c4c4)"></div>
<div class="a" style="left:1884px;top:131px;width:2px;height:2px;background:#8a8a8a"></div><div class="a" style="left:1890px;top:131px;width:2px;height:2px;background:#8a8a8a"></div><div class="a" style="left:1896px;top:131px;width:2px;height:2px;background:#8a8a8a"></div><div class="a" style="left:1902px;top:131px;width:2px;height:2px;background:#8a8a8a"></div><svg width="1920" height="1080" style="left:0;top:0;z-index:5"><circle cx="1490" cy="589" r="6.8" fill="#4b4b4b"/><path d="M1487 586 L1493 592 M1493 586 L1487 592" stroke="#fff" stroke-width="2"/><circle cx="1508" cy="589" r="6.8" fill="#4b4b4b"/><rect x="1505.5" y="585" width="6" height="5" fill="none" stroke="#fff" stroke-width="1.3"/><rect x="1503.5" y="587.5" width="6" height="5" fill="#4b4b4b" stroke="#fff" stroke-width="1.3"/>
<path d="M1497.7 613.3 Q1500.5 607.2 1505 607.4 Q1509.8 607.4 1512.6 613 Q1509.5 618.8 1505 618.6 Q1500.5 618.6 1497.7 613.3 Z" fill="#000"/><circle cx="1505" cy="613.2" r="3.6" fill="#fff"/><circle cx="1505" cy="613.2" r="2.5" fill="#000"/><circle cx="1504.1" cy="612.2" r="0.8" fill="#fff"/>
<path d="M1546.7 613.3 Q1549.5 607.2 1554 607.4 Q1558.8 607.4 1561.6 613 Q1558.5 618.8 1554 618.6 Q1549.5 618.6 1546.7 613.3 Z" fill="#9a9a9a"/><circle cx="1554" cy="613.2" r="3.6" fill="#fff"/><circle cx="1554" cy="613.2" r="2.5" fill="#9a9a9a"/><circle cx="1553.1" cy="612.2" r="0.8" fill="#fff"/>
<path d="M1597 613 H1609 M1603 607 V619" stroke="#e00000" stroke-width="3"/>
<path d="M1648 613 H1660" stroke="#e07070" stroke-width="3"/>
<text x="1695.5" y="618" font-family="Liberation Sans" font-size="11" fill="#7a7a7a" style="-webkit-text-stroke:0">a</text><text x="1704" y="618" font-family="Liberation Sans" font-size="11" fill="#7a7a7a" style="-webkit-text-stroke:0">b</text><line x1="1702.5" y1="607" x2="1702.5" y2="620" stroke="#888" stroke-width="0.8"/>
<path d="M1745.5 619.5 L1756 607 L1758.5 609 L1748 621.5 L1744.5 622 Z" fill="#e0a030" stroke="#7a5010" stroke-width="0.7"/><path d="M1756 607 l1.5 -1.8 l2.6 2.1 l-1.6 1.7 z" fill="#e02020"/>
<rect x="1796.5" y="607.5" width="11" height="13" fill="#ececf0" stroke="#dcdce4" stroke-width="0.6"/><path d="M1798.5 608.5 Q1803 609 1802 613.5 V617" stroke="#7a90f8" stroke-width="2.2" fill="none"/><path d="M1798.5 615.5 L1802 619.5 L1805.5 615.5" stroke="#7a90f8" stroke-width="2" fill="none"/>
<rect x="1845.5" y="607.5" width="11" height="11" rx="1.5" fill="#f06048" stroke="#d84a34" stroke-width="0.8"/><path d="M1848.5 610.5 L1853.5 615.5 M1853.5 610.5 L1848.5 615.5" stroke="#fff" stroke-width="1.5"/>
<path d="M1487.7 638.3 Q1490.5 632.2 1495 632.4 Q1499.8 632.4 1502.6 638 Q1499.5 643.8 1495 643.6 Q1490.5 643.6 1487.7 638.3 Z" fill="#5a4a3a"/><circle cx="1495" cy="638.2" r="3.6" fill="#fff"/><circle cx="1495" cy="638.2" r="2.5" fill="#5a4a3a"/><circle cx="1494.1" cy="637.2" r="0.8" fill="#fff"/>
<path d="M1511.5 644.5 L1522 632 L1524.5 634 L1514 646.5 L1510.5 647 Z" fill="#e8b050" stroke="#8a6020" stroke-width="0.6"/><path d="M1522 632 l1.5 -1.8 l2.6 2.1 l-1.6 1.7 z" fill="#e05050"/>
<path d="M1487.7 658.3 Q1490.5 652.2 1495 652.4 Q1499.8 652.4 1502.6 658 Q1499.5 663.8 1495 663.6 Q1490.5 663.6 1487.7 658.3 Z" fill="#000"/><circle cx="1495" cy="658.2" r="3.6" fill="#fff"/><circle cx="1495" cy="658.2" r="2.5" fill="#000"/><circle cx="1494.1" cy="657.2" r="0.8" fill="#fff"/>
<rect x="1877.5" y="135.5" width="36" height="36" fill="#b8b8b8" stroke="#8a8a8a"/><rect x="1879" y="137" width="33" height="33" fill="#c8c8c8"/><rect x="1881.5" y="139.5" width="27" height="27" fill="#fff" stroke="#555"/><rect x="1881" y="139" width="28" height="5" fill="#000"/><rect x="1882.5" y="140" width="3" height="3" fill="#fff"/><path d="M1888 157 L1893 152 L1903 150 L1903 160 L1893 163 Z" fill="#888" stroke="#444" stroke-width="0.6"/><path d="M1891 159 L1897 153 L1904 152 V161 L1897 164 Z" fill="#eee" stroke="#555" stroke-width="0.6"/><path d="M1896 161 L1901 155 V161 Z" fill="none" stroke="#f00" stroke-width="0.8"/>
<rect x="1877.5" y="176.5" width="36" height="36" fill="#b8b8b8" stroke="#8a8a8a"/><rect x="1879" y="178" width="33" height="33" fill="#c8c8c8"/><rect x="1881.5" y="180.5" width="27" height="27" fill="#fff" stroke="#555"/><rect x="1881" y="180" width="28" height="5" fill="#000"/><rect x="1882.5" y="181" width="3" height="3" fill="#fff"/><rect x="1888" y="189" width="10" height="8" fill="#fff5c8" stroke="#666" stroke-width="0.7"/><circle cx="1898" cy="196" r="5" fill="#fff5c8" stroke="#666" stroke-width="0.7"/>
<rect x="1881.5" y="221.5" width="27" height="27" fill="#fff" stroke="#555"/><rect x="1881" y="221" width="28" height="5" fill="#000"/><rect x="1882.5" y="222" width="3" height="3" fill="#fff"/><rect x="1887.5" y="231.5" width="15" height="11" rx="2" fill="#f4f4f4" stroke="#c8d4e8"/>
<rect x="1879" y="260" width="1" height="1" fill="#777"/><rect x="1882" y="260" width="1" height="1" fill="#777"/><rect x="1885" y="260" width="1" height="1" fill="#777"/><rect x="1888" y="260" width="1" height="1" fill="#777"/><rect x="1891" y="260" width="1" height="1" fill="#777"/><rect x="1894" y="260" width="1" height="1" fill="#777"/><rect x="1897" y="260" width="1" height="1" fill="#777"/><rect x="1900" y="260" width="1" height="1" fill="#777"/><rect x="1903" y="260" width="1" height="1" fill="#777"/><rect x="1906" y="260" width="1" height="1" fill="#777"/><rect x="1909" y="260" width="1" height="1" fill="#777"/><rect x="1912" y="260" width="1" height="1" fill="#777"/>
<rect x="1877.5" y="268.5" width="36" height="36" fill="#b8b8b8" stroke="#8a8a8a"/><rect x="1879" y="270" width="33" height="33" fill="#c8c8c8"/><rect x="1881.5" y="272.5" width="27" height="27" fill="#fff" stroke="#555"/><rect x="1881" y="272" width="28" height="5" fill="#000"/><rect x="1882.5" y="273" width="3" height="3" fill="#fff"/><rect x="1884" y="281" width="4" height="3" fill="#000"/><rect x="1891.5" y="281.5" width="14" height="2.5" fill="#fff" stroke="#333" stroke-width="0.6"/><rect x="1884" y="286" width="4" height="3" fill="#000"/><rect x="1891.5" y="286.5" width="14" height="2.5" fill="#fff" stroke="#333" stroke-width="0.6"/><rect x="1884" y="291" width="4" height="3" fill="#000"/><rect x="1891.5" y="291.5" width="14" height="2.5" fill="#fff" stroke="#333" stroke-width="0.6"/>
<rect x="1881.5" y="313.5" width="27" height="27" fill="#fff" stroke="#555"/><rect x="1881" y="313" width="28" height="5" fill="#000"/><rect x="1882.5" y="314" width="3" height="3" fill="#fff"/><path d="M1886 322 H1904 L1897 330 V337 L1893 335 V330 Z" fill="#ccc" stroke="#555" stroke-width="0.7"/>
<rect x="1877.5" y="350.5" width="36" height="36" fill="#b8b8b8" stroke="#8a8a8a"/><rect x="1879" y="352" width="33" height="33" fill="#c8c8c8"/><rect x="1881.5" y="354.5" width="27" height="27" fill="#fff" stroke="#555"/><rect x="1881" y="354" width="28" height="5" fill="#000"/><rect x="1882.5" y="355" width="3" height="3" fill="#fff"/><path d="M1887 362 L1892 368 V373 L1887 379 Z" fill="#fff" stroke="#555" stroke-width="0.7"/><rect x="1892" y="366" width="12" height="9" fill="#555"/><line x1="1884" y1="370" x2="1906" y2="370" stroke="#f08080" stroke-width="0.6" stroke-dasharray="1 1"/>
<rect x="1879" y="393" width="1" height="1" fill="#777"/><rect x="1882" y="393" width="1" height="1" fill="#777"/><rect x="1885" y="393" width="1" height="1" fill="#777"/><rect x="1888" y="393" width="1" height="1" fill="#777"/><rect x="1891" y="393" width="1" height="1" fill="#777"/><rect x="1894" y="393" width="1" height="1" fill="#777"/><rect x="1897" y="393" width="1" height="1" fill="#777"/><rect x="1900" y="393" width="1" height="1" fill="#777"/><rect x="1903" y="393" width="1" height="1" fill="#777"/><rect x="1906" y="393" width="1" height="1" fill="#777"/><rect x="1909" y="393" width="1" height="1" fill="#777"/><rect x="1912" y="393" width="1" height="1" fill="#777"/>
<rect x="1877.5" y="401.5" width="36" height="36" fill="#b8b8b8" stroke="#8a8a8a"/><rect x="1879" y="403" width="33" height="33" fill="#c8c8c8"/><rect x="1881.5" y="405.5" width="27" height="27" fill="#fff" stroke="#555"/><rect x="1881" y="405" width="28" height="5" fill="#000"/><rect x="1882.5" y="406" width="3" height="3" fill="#fff"/><line x1="1884" y1="413" x2="1898" y2="413" stroke="#aaa" stroke-width="0.8"/><line x1="1884" y1="416" x2="1898" y2="416" stroke="#aaa" stroke-width="0.8"/><line x1="1884" y1="419" x2="1898" y2="419" stroke="#aaa" stroke-width="0.8"/><line x1="1884" y1="422" x2="1898" y2="422" stroke="#aaa" stroke-width="0.8"/><rect x="1882" y="428" width="26" height="4" fill="#fff" stroke="#666" stroke-width="0.5"/>
<rect x="1881.5" y="446.5" width="27" height="27" fill="#fff" stroke="#555"/><rect x="1881" y="446" width="28" height="5" fill="#000"/><rect x="1882.5" y="447" width="3" height="3" fill="#fff"/><rect x="1888" y="455" width="13" height="15" rx="1" fill="#c08030"/><rect x="1890" y="457" width="9" height="11" fill="#f4f4f4"/><rect x="1892" y="453" width="5" height="3" fill="#888"/>
<circle cx="87.5" cy="133.5" r="5.6" fill="#f4f4f4" stroke="#22348a" stroke-width="1.8"/><path d="M85 131 L87 135 M84 134 H88" stroke="#c08080" stroke-width="0.6"/><line x1="87" y1="133" x2="92" y2="138.5" stroke="#f0a018" stroke-width="2"/><circle cx="92.5" cy="139" r="1" fill="#e06060"/>
<circle cx="55" cy="959" r="6.8" fill="#4b4b4b"/><path d="M52 956 L58 962 M58 956 L52 962" stroke="#fff" stroke-width="2"/><circle cx="73" cy="959" r="6.8" fill="#4b4b4b"/><rect x="70.5" y="955" width="6" height="5" fill="none" stroke="#fff" stroke-width="1.3"/><rect x="68.5" y="957.5" width="6" height="5" fill="#4b4b4b" stroke="#fff" stroke-width="1.3"/>
<rect x="1438.5" y="1020.5" width="13" height="9" fill="#d8d8d8" stroke="#333"/><rect x="1438.5" y="1020.5" width="13" height="2.5" fill="#222"/><rect x="1448" y="1021" width="2" height="1.2" fill="#bbb"/></svg>
<svg width="1920" height="1080" style="left:0;top:0;z-index:5"><rect x="11" y="1047" width="2" height="2" fill="#808080"/><rect x="11" y="1053" width="2" height="2" fill="#808080"/><rect x="11" y="1059" width="2" height="2" fill="#808080"/><rect x="11" y="1065" width="2" height="2" fill="#808080"/>
<rect x="16.5" y="1040.5" width="36" height="36" fill="url(#gridbtn)" stroke="#999"/>
<path d="M21.5 1045 V1070 H30.5 Z" stroke="#000" stroke-width="1.2" fill="none"/><path d="M38.5 1045 V1070 H48 Z" stroke="#f00" stroke-width="1.2" fill="none"/><path d="M25 1056.5 H36 V1054 L40 1058 L36 1062 V1059.5 H25 Z" stroke="#4a4aff" stroke-width="1" fill="#fff"/>
<path d="M62 1057 V1070 H72 Z" stroke="#000" stroke-width="1.2" fill="none"/><path d="M73 1053 L87 1044 V1053 Z" stroke="#f00" stroke-width="1.2" fill="none"/><path d="M73 1067 Q81 1066 81 1056 L78 1056 L82 1051 L86 1056 L83 1056 Q84 1069 73 1069 Z" stroke="#4a4aff" stroke-width="1" fill="#fff"/>
<path d="M103 1046 V1070 H112 Z" stroke="#000" stroke-width="1.2" fill="none"/><path d="M122.5 1050 V1065.5 H128.5 Z" stroke="#f00" stroke-width="1.2" fill="none"/><path d="M109 1057.5 H118 V1055 L122 1059 L118 1063 V1060.5 H109 Z" stroke="#4a4aff" stroke-width="1" fill="#fff"/>
<path d="M143 1054 L165.4 1043.6 L149 1060 Z" stroke="#000" stroke-width="1.2" fill="none"/><path d="M154.8 1066 L171.2 1049.5 L160.8 1072 Z" stroke="#f00" stroke-width="1.2" fill="none"/><line x1="150" y1="1065" x2="169" y2="1046" stroke="#4a4aff" stroke-dasharray="2.5 5.5"/>
<path d="M185.6 1069.3 L194.4 1045.5 V1069.3 Z" stroke="#000" stroke-width="1.2" fill="none"/><path d="M202.3 1045.5 V1069.3 H211.3 Z" stroke="#f00" stroke-width="1.2" fill="none"/><line x1="198.4" y1="1044" x2="198.4" y2="1072" stroke="#4a4aff" stroke-width="1.2" stroke-dasharray="3 3"/>
<path d="M227.5 1045 V1054 H251.5 Z" stroke="#000" stroke-width="1.2" fill="none"/><path d="M227.5 1071 V1062 H251.5 Z" stroke="#f00" stroke-width="1.2" fill="none"/><line x1="226" y1="1058" x2="253" y2="1058" stroke="#7a7aff" stroke-width="2" stroke-dasharray="4 4"/>
<path d="M267.5 1057.5 V1070 H276.5 Z" stroke="#000" stroke-width="1.2" fill="none"/><path d="M280.5 1067 L293.5 1058.5 V1067 Z" stroke="#f00" stroke-width="1.2" fill="none"/><path d="M266 1049.5 H275 V1047 L279 1051 L275 1055 V1052.5 H266 Z" stroke="#4a4aff" stroke-width="1" fill="#fff"/><path d="M290 1048 A4.5 4.5 0 1 0 291 1052" fill="none" stroke="#7a7aff" stroke-width="2"/><path d="M288 1052 L290.5 1048 L293 1052 Z" fill="#fff" stroke="#6a6aff" stroke-width="0.8"/>
<path d="M308.5 1056.5 V1070 H317 Z" stroke="#000" stroke-width="1.2" fill="none"/><path d="M324.5 1044.5 L333.5 1057.5 H324.5 Z" stroke="#f00" stroke-width="1.2" fill="none"/><path d="M319.5 1067.5 Q327.5 1066 328 1060" stroke="#6a6aff" stroke-width="3.2" fill="none" stroke-linecap="round"/><path d="M319.5 1067.5 Q327.5 1066 328 1060" stroke="#fff" stroke-width="1.2" fill="none" stroke-linecap="round"/>
<rect x="351.5" y="1045.5" width="13" height="13" stroke="#000" stroke-width="1.2" fill="none"/><line x1="351.5" y1="1058.5" x2="364.5" y2="1045.5" stroke="#000" stroke-width="1.2"/><path d="M360 1063 L365 1056 L374 1063 Z" stroke="#f00" stroke-width="1.2" fill="none"/><path d="M360.5 1072 V1063.5 H374.5 V1072" stroke="#000" stroke-width="1.2" fill="none"/><path d="M352 1058 L361 1062 M365 1046 L374 1062" stroke="#6a6aff" stroke-width="0.8"/>
<line x1="390.5" y1="1044" x2="390.5" y2="1072" stroke="#0000ff" stroke-width="1.3"/><rect x="393.5" y="1045.5" width="10" height="5" stroke="#000" stroke-width="1.2" fill="none"/><rect x="393.5" y="1055.5" width="22" height="5" stroke="#000" stroke-width="1.2" fill="none"/><rect x="393.5" y="1065.5" width="18" height="5" stroke="#000" stroke-width="1.2" fill="none"/>
<rect x="428" y="1041" width="1" height="1" fill="#8a8a8a"/><rect x="428" y="1044" width="1" height="1" fill="#8a8a8a"/><rect x="428" y="1047" width="1" height="1" fill="#8a8a8a"/><rect x="428" y="1050" width="1" height="1" fill="#8a8a8a"/><rect x="428" y="1053" width="1" height="1" fill="#8a8a8a"/><rect x="428" y="1056" width="1" height="1" fill="#8a8a8a"/><rect x="428" y="1059" width="1" height="1" fill="#8a8a8a"/><rect x="428" y="1062" width="1" height="1" fill="#8a8a8a"/><rect x="428" y="1065" width="1" height="1" fill="#8a8a8a"/><rect x="428" y="1068" width="1" height="1" fill="#8a8a8a"/><rect x="428" y="1071" width="1" height="1" fill="#8a8a8a"/><rect x="428" y="1074" width="1" height="1" fill="#8a8a8a"/>
<line x1="441" y1="1059" x2="462" y2="1048" stroke="#f00"/><line x1="446" y1="1069" x2="467" y2="1058" stroke="#000"/><line x1="447" y1="1055" x2="452" y2="1066" stroke="#5050ff"/>
<line x1="482" y1="1059" x2="503" y2="1048" stroke="#f00"/><line x1="487" y1="1069" x2="508" y2="1058" stroke="#000"/><circle cx="493.5" cy="1065.5" r="2.2" fill="#f00"/>
<rect x="520" y="1041" width="1" height="1" fill="#8a8a8a"/><rect x="520" y="1044" width="1" height="1" fill="#8a8a8a"/><rect x="520" y="1047" width="1" height="1" fill="#8a8a8a"/><rect x="520" y="1050" width="1" height="1" fill="#8a8a8a"/><rect x="520" y="1053" width="1" height="1" fill="#8a8a8a"/><rect x="520" y="1056" width="1" height="1" fill="#8a8a8a"/><rect x="520" y="1059" width="1" height="1" fill="#8a8a8a"/><rect x="520" y="1062" width="1" height="1" fill="#8a8a8a"/><rect x="520" y="1065" width="1" height="1" fill="#8a8a8a"/><rect x="520" y="1068" width="1" height="1" fill="#8a8a8a"/><rect x="520" y="1071" width="1" height="1" fill="#8a8a8a"/><rect x="520" y="1074" width="1" height="1" fill="#8a8a8a"/>
<line x1="532" y1="1045" x2="559" y2="1058" stroke="#000" stroke-width="1.2"/><line x1="532" y1="1070" x2="544" y2="1051" stroke="#000" stroke-width="1.2"/><line x1="538" y1="1061" x2="544" y2="1051" stroke="#f00" stroke-width="1.2"/><path d="M543 1068 L549 1060 L547 1058 L553 1057 L552 1063 L550 1062 L545 1069 Z" fill="#fff" stroke="#5a5aff"/>
<line x1="575" y1="1046" x2="599" y2="1054" stroke="#000" stroke-width="1.2"/><line x1="575" y1="1071" x2="599" y2="1054" stroke="#000" stroke-width="1.2"/><path d="M588 1050 L599 1054 L589 1063" stroke="#f00" stroke-width="1.2" fill="none"/><path d="M586 1044 h6 v-2 l4 4 l-4 4 v-2 h-6 z M586 1065 h6 v-2 l4 4 l-4 4 v-2 h-6 z" fill="#fff" stroke="#5a5aff"/>
<line x1="617" y1="1070" x2="634" y2="1045" stroke="#000" stroke-width="1.2"/><line x1="617" y1="1070" x2="624" y2="1060" stroke="#f00" stroke-width="1.2"/><path d="M627 1064 L634 1055 L632 1053 L637 1051 L637 1057 L635 1056 L629 1065 Z" fill="#fff" stroke="#5a5aff"/>
<path d="M656.5 1054 V1066 Q656.5 1068.5 660 1068.5 H671 M671 1048.5 H660 Q656.5 1048.5 656.5 1052" stroke="#000" stroke-width="1.2" fill="none"/><path d="M671 1048.5 H681 V1054 H663 V1058 H671" stroke="#000" stroke-width="1.2" fill="none"/><path d="M671 1048.5 H681 V1054 H671 M671 1058.5 H681 V1068.5 H671" stroke="#f00" stroke-width="1.2" fill="none"/><path d="M664 1061.5 H674 V1059 L678 1063 L674 1067 V1064.5 H664 Z" stroke="#4a4aff" stroke-width="1" fill="#fff"/>
<path d="M694 1060 L723 1043 M706 1072 L726 1062 M709 1043 L726 1068" stroke="#f0a0a0" stroke-width="0.8"/><circle cx="707" cy="1063" r="5" fill="none" stroke="#f0a0a0" stroke-width="0.8"/><rect x="702.5" y="1051.5" width="16" height="13" fill="none" stroke="#1a1aff" stroke-width="1.5"/><path d="M705 1064 Q705 1055 711 1055 Q716 1055 716 1064" stroke="#000" fill="none"/>
<rect x="735" y="1041" width="1" height="1" fill="#8a8a8a"/><rect x="735" y="1044" width="1" height="1" fill="#8a8a8a"/><rect x="735" y="1047" width="1" height="1" fill="#8a8a8a"/><rect x="735" y="1050" width="1" height="1" fill="#8a8a8a"/><rect x="735" y="1053" width="1" height="1" fill="#8a8a8a"/><rect x="735" y="1056" width="1" height="1" fill="#8a8a8a"/><rect x="735" y="1059" width="1" height="1" fill="#8a8a8a"/><rect x="735" y="1062" width="1" height="1" fill="#8a8a8a"/><rect x="735" y="1065" width="1" height="1" fill="#8a8a8a"/><rect x="735" y="1068" width="1" height="1" fill="#8a8a8a"/><rect x="735" y="1071" width="1" height="1" fill="#8a8a8a"/><rect x="735" y="1074" width="1" height="1" fill="#8a8a8a"/>
<path d="M749 1048 H759 L770.5 1060 V1069" stroke="#000" stroke-width="1.2" fill="none"/><line x1="759" y1="1048" x2="770.5" y2="1060" stroke="#f00" stroke-width="1.2"/>
<path d="M790 1048 H800 Q811 1048 811.5 1059 V1069" stroke="#000" stroke-width="1.2" fill="none"/><path d="M800 1048 Q811 1048 811.5 1059" stroke="#f00" stroke-width="1.2" fill="none"/><circle cx="800.5" cy="1059.5" r="0.8" fill="#00f"/>
<rect x="827" y="1041" width="1" height="1" fill="#8a8a8a"/><rect x="827" y="1044" width="1" height="1" fill="#8a8a8a"/><rect x="827" y="1047" width="1" height="1" fill="#8a8a8a"/><rect x="827" y="1050" width="1" height="1" fill="#8a8a8a"/><rect x="827" y="1053" width="1" height="1" fill="#8a8a8a"/><rect x="827" y="1056" width="1" height="1" fill="#8a8a8a"/><rect x="827" y="1059" width="1" height="1" fill="#8a8a8a"/><rect x="827" y="1062" width="1" height="1" fill="#8a8a8a"/><rect x="827" y="1065" width="1" height="1" fill="#8a8a8a"/><rect x="827" y="1068" width="1" height="1" fill="#8a8a8a"/><rect x="827" y="1071" width="1" height="1" fill="#8a8a8a"/><rect x="827" y="1074" width="1" height="1" fill="#8a8a8a"/>
<line x1="838" y1="1067" x2="856" y2="1043" stroke="#000" stroke-width="1.2"/><path d="M842 1056 L852 1054 L854 1058 L844 1059 Z" fill="#e8e8e8" stroke="#888" stroke-width="0.6"/><ellipse cx="863" cy="1057.5" rx="5" ry="3" fill="none" stroke="#e02020" stroke-width="2"/><ellipse cx="856" cy="1066" rx="2.8" ry="5" fill="none" stroke="#e02020" stroke-width="2"/><circle cx="848" cy="1053" r="2" fill="#f00"/>
<line x1="879" y1="1067" x2="897" y2="1043" stroke="#000" stroke-width="1.2"/><path d="M883 1056 L893 1054 L895 1058 L885 1059 Z" fill="#e8e8e8" stroke="#888" stroke-width="0.6"/><ellipse cx="904" cy="1057.5" rx="5" ry="3" fill="none" stroke="#e02020" stroke-width="2"/><ellipse cx="897" cy="1066" rx="2.8" ry="5" fill="none" stroke="#e02020" stroke-width="2"/><circle cx="891" cy="1051" r="2" fill="#f00"/><circle cx="884" cy="1060" r="2" fill="#f00"/>
<line x1="921" y1="1057" x2="949" y2="1057" stroke="#000" stroke-width="1.2"/><line x1="924" y1="1057" x2="944" y2="1057" stroke="#aaa" stroke-width="0.6"/><line x1="928.5" y1="1046" x2="928.5" y2="1069" stroke="#000" stroke-width="1.2"/><line x1="941.5" y1="1046" x2="941.5" y2="1069" stroke="#000" stroke-width="1.2"/><circle cx="928.5" cy="1057" r="2.2" fill="#f00"/><circle cx="941.5" cy="1057" r="2.2" fill="#f00"/>
<path d="M966.5 1046 V1052 M966.5 1062 V1068" stroke="#000" stroke-width="1.2"/><line x1="979.5" y1="1046" x2="979.5" y2="1069" stroke="#555" stroke-width="1.4"/><path d="M979 1054 H987 M979 1061.5 H987" stroke="#000" stroke-width="1.2"/><path d="M967 1054 H978 M967 1061.5 H978" stroke="#bbb" stroke-width="0.6" stroke-dasharray="1 1"/><circle cx="979" cy="1054" r="2.2" fill="#f00"/><circle cx="979" cy="1061.5" r="2.2" fill="#f00"/>
<path d="M1010.5 1046 V1069 M1023.5 1046 V1069" stroke="#000" stroke-width="1.2"/><line x1="1010" y1="1057" x2="1024" y2="1057" stroke="#000" stroke-width="1.2"/><path d="M1003 1055 l3 4 M1006 1055 l-3 4 M1027 1055 l3 4 M1030 1055 l-3 4" stroke="#4a4aff" stroke-width="0.8"/><line x1="1006" y1="1057" x2="1030" y2="1057" stroke="#9a9aff" stroke-width="0.5"/><circle cx="1010.5" cy="1057" r="2.2" fill="#f00"/><circle cx="1023.5" cy="1057" r="2.2" fill="#f00"/>
<path d="M1045 1071 L1053 1063 M1061 1054 L1071 1045" stroke="#000" stroke-width="1.2"/><circle cx="1057.5" cy="1058.5" r="2.2" fill="#f00"/>
<rect x="1083" y="1041" width="1" height="1" fill="#8a8a8a"/><rect x="1083" y="1044" width="1" height="1" fill="#8a8a8a"/><rect x="1083" y="1047" width="1" height="1" fill="#8a8a8a"/><rect x="1083" y="1050" width="1" height="1" fill="#8a8a8a"/><rect x="1083" y="1053" width="1" height="1" fill="#8a8a8a"/><rect x="1083" y="1056" width="1" height="1" fill="#8a8a8a"/><rect x="1083" y="1059" width="1" height="1" fill="#8a8a8a"/><rect x="1083" y="1062" width="1" height="1" fill="#8a8a8a"/><rect x="1083" y="1065" width="1" height="1" fill="#8a8a8a"/><rect x="1083" y="1068" width="1" height="1" fill="#8a8a8a"/><rect x="1083" y="1071" width="1" height="1" fill="#8a8a8a"/><rect x="1083" y="1074" width="1" height="1" fill="#8a8a8a"/>
<line x1="1101" y1="1069" x2="1122" y2="1058" stroke="#000" stroke-width="1.2"/><path d="M1099 1064 Q1101 1050 1112 1050 Q1117 1050 1119 1053" stroke="#1a1aff" stroke-width="1.6" fill="none"/><path d="M1117 1050 L1122 1053 L1117 1056 Z M1096 1063 L1100 1066 L1101 1061 Z" fill="#1a1aff" stroke="#1a1aff"/>
<rect x="1134" y="1041" width="1" height="1" fill="#8a8a8a"/><rect x="1134" y="1044" width="1" height="1" fill="#8a8a8a"/><rect x="1134" y="1047" width="1" height="1" fill="#8a8a8a"/><rect x="1134" y="1050" width="1" height="1" fill="#8a8a8a"/><rect x="1134" y="1053" width="1" height="1" fill="#8a8a8a"/><rect x="1134" y="1056" width="1" height="1" fill="#8a8a8a"/><rect x="1134" y="1059" width="1" height="1" fill="#8a8a8a"/><rect x="1134" y="1062" width="1" height="1" fill="#8a8a8a"/><rect x="1134" y="1065" width="1" height="1" fill="#8a8a8a"/><rect x="1134" y="1068" width="1" height="1" fill="#8a8a8a"/><rect x="1134" y="1071" width="1" height="1" fill="#8a8a8a"/><rect x="1134" y="1074" width="1" height="1" fill="#8a8a8a"/>
<rect x="1147.5" y="1050.5" width="26" height="16" fill="#fff" stroke="#000" stroke-width="1.2"/><text x="1150" y="1064" font-family="Liberation Serif" font-size="14" fill="#000">A</text><line x1="1163.5" y1="1052" x2="1163.5" y2="1065" stroke="#000" stroke-width="1.3"/>
<rect x="1186.5" y="1050.5" width="29" height="18" fill="#e8e8e8" stroke="#333" stroke-width="1.2"/><line x1="1201.5" y1="1050.5" x2="1201.5" y2="1068.5" stroke="#333"/><path d="M1190 1059 H1199 M1194.5 1054 V1064" stroke="#000" stroke-width="1.1"/><circle cx="1194.5" cy="1059" r="2.5" fill="none" stroke="#000"/><text x="1204" y="1066" font-family="Liberation Sans" font-size="10" fill="#000">.1</text><path d="M1197 1057 L1210 1044 L1213 1046 L1200 1059 L1196 1060 Z" fill="#f0b030" stroke="#7a4a10" stroke-width="0.7"/><path d="M1210 1044 l2 -2 l3 2 l-2 2 z" fill="#e03030"/>
<path d="M1229.5 1071.5 V1062 L1236 1055 H1253 V1071.5 Z" fill="#fff" stroke="#333" stroke-width="1.2"/><line x1="1230" y1="1071" x2="1238" y2="1056" stroke="#555" stroke-width="0.6"/><line x1="1234" y1="1071" x2="1242" y2="1056" stroke="#555" stroke-width="0.6"/><line x1="1238" y1="1071" x2="1246" y2="1056" stroke="#555" stroke-width="0.6"/><line x1="1242" y1="1071" x2="1250" y2="1056" stroke="#555" stroke-width="0.6"/><line x1="1246" y1="1071" x2="1254" y2="1056" stroke="#555" stroke-width="0.6"/><circle cx="1243" cy="1063" r="3.2" fill="#fff" stroke="#333" stroke-width="1.1"/><path d="M1240 1059 L1253 1046 L1256 1048 L1243 1061 L1239 1062 Z" fill="#f0b030" stroke="#7a4a10" stroke-width="0.7"/><path d="M1253 1046 l2 -2 l3 2 l-2 2 z" fill="#e03030"/>
<rect x="1267" y="1041" width="1" height="1" fill="#8a8a8a"/><rect x="1267" y="1044" width="1" height="1" fill="#8a8a8a"/><rect x="1267" y="1047" width="1" height="1" fill="#8a8a8a"/><rect x="1267" y="1050" width="1" height="1" fill="#8a8a8a"/><rect x="1267" y="1053" width="1" height="1" fill="#8a8a8a"/><rect x="1267" y="1056" width="1" height="1" fill="#8a8a8a"/><rect x="1267" y="1059" width="1" height="1" fill="#8a8a8a"/><rect x="1267" y="1062" width="1" height="1" fill="#8a8a8a"/><rect x="1267" y="1065" width="1" height="1" fill="#8a8a8a"/><rect x="1267" y="1068" width="1" height="1" fill="#8a8a8a"/><rect x="1267" y="1071" width="1" height="1" fill="#8a8a8a"/><rect x="1267" y="1074" width="1" height="1" fill="#8a8a8a"/>
<path d="M1294 1049 L1302 1047 L1308 1068 L1300 1071 Z" fill="#cc1010" stroke="#7a0808" stroke-width="0.6"/><path d="M1296 1049 Q1291 1042 1288 1047" stroke="#888" stroke-width="1" fill="none"/><circle cx="1284" cy="1051" r="3" fill="#ffe020" stroke="#f0a000"/>
<rect x="1318" y="1041" width="1" height="1" fill="#8a8a8a"/><rect x="1318" y="1044" width="1" height="1" fill="#8a8a8a"/><rect x="1318" y="1047" width="1" height="1" fill="#8a8a8a"/><rect x="1318" y="1050" width="1" height="1" fill="#8a8a8a"/><rect x="1318" y="1053" width="1" height="1" fill="#8a8a8a"/><rect x="1318" y="1056" width="1" height="1" fill="#8a8a8a"/><rect x="1318" y="1059" width="1" height="1" fill="#8a8a8a"/><rect x="1318" y="1062" width="1" height="1" fill="#8a8a8a"/><rect x="1318" y="1065" width="1" height="1" fill="#8a8a8a"/><rect x="1318" y="1068" width="1" height="1" fill="#8a8a8a"/><rect x="1318" y="1071" width="1" height="1" fill="#8a8a8a"/><rect x="1318" y="1074" width="1" height="1" fill="#8a8a8a"/>
<rect x="1348.5" y="1048.5" width="8" height="7" fill="#888" stroke="#000"/><rect x="1332.5" y="1061.5" width="8" height="7" fill="#888" stroke="#000"/><rect x="1336.5" y="1052.5" width="15" height="11" fill="#fff5d0" stroke="#000"/>
<rect x="1388.5" y="1048.5" width="8" height="7" fill="#888" stroke="#000"/><rect x="1372.5" y="1061.5" width="8" height="7" fill="#888" stroke="#000"/><rect x="1377.5" y="1052.5" width="15" height="11" fill="#fff5d0" stroke="#000"/>
<rect x="1410" y="1041" width="1" height="1" fill="#8a8a8a"/><rect x="1410" y="1044" width="1" height="1" fill="#8a8a8a"/><rect x="1410" y="1047" width="1" height="1" fill="#8a8a8a"/><rect x="1410" y="1050" width="1" height="1" fill="#8a8a8a"/><rect x="1410" y="1053" width="1" height="1" fill="#8a8a8a"/><rect x="1410" y="1056" width="1" height="1" fill="#8a8a8a"/><rect x="1410" y="1059" width="1" height="1" fill="#8a8a8a"/><rect x="1410" y="1062" width="1" height="1" fill="#8a8a8a"/><rect x="1410" y="1065" width="1" height="1" fill="#8a8a8a"/><rect x="1410" y="1068" width="1" height="1" fill="#8a8a8a"/><rect x="1410" y="1071" width="1" height="1" fill="#8a8a8a"/><rect x="1410" y="1074" width="1" height="1" fill="#8a8a8a"/>
<text x="1426" y="1062" font-family="Liberation Sans" font-size="12" fill="#111">123</text>
<path d="M1465 1066 L1470 1054 H1481 L1489 1065" stroke="#000" stroke-width="1" fill="none"/><text x="1462" y="1060" font-size="6" font-family="Liberation Sans">1</text><text x="1473" y="1051" font-size="7" font-family="Liberation Sans">2</text><text x="1487" y="1059" font-size="6" font-family="Liberation Sans">3</text>
<rect x="1502" y="1041" width="1" height="1" fill="#8a8a8a"/><rect x="1502" y="1044" width="1" height="1" fill="#8a8a8a"/><rect x="1502" y="1047" width="1" height="1" fill="#8a8a8a"/><rect x="1502" y="1050" width="1" height="1" fill="#8a8a8a"/><rect x="1502" y="1053" width="1" height="1" fill="#8a8a8a"/><rect x="1502" y="1056" width="1" height="1" fill="#8a8a8a"/><rect x="1502" y="1059" width="1" height="1" fill="#8a8a8a"/><rect x="1502" y="1062" width="1" height="1" fill="#8a8a8a"/><rect x="1502" y="1065" width="1" height="1" fill="#8a8a8a"/><rect x="1502" y="1068" width="1" height="1" fill="#8a8a8a"/><rect x="1502" y="1071" width="1" height="1" fill="#8a8a8a"/><rect x="1502" y="1074" width="1" height="1" fill="#8a8a8a"/>
<circle cx="1520" cy="1047" r="3" fill="#fff" stroke="#555" stroke-width="0.9"/><path d="M1514 1063 V1053 Q1514 1051 1517 1051 H1523 Q1526 1051 1526 1053 V1063 M1517 1054 V1071 H1523 V1054" fill="#fff" stroke="#555" stroke-width="0.9"/><circle cx="1536" cy="1047" r="3" fill="#fff" stroke="#555" stroke-width="0.9"/><path d="M1530 1063 V1053 Q1530 1051 1533 1051 H1539 Q1542 1051 1542 1053 V1063 M1533 1054 V1071 H1539 V1054" fill="#fff" stroke="#555" stroke-width="0.9"/>
<text x="1558" y="1056" font-family="Liberation Sans" font-size="12" fill="#111">0.00</text><path d="M1555 1059 L1560 1063 L1555 1067 M1583 1059 L1578 1063 L1583 1067" stroke="#5a5aff" fill="none"/><line x1="1562" y1="1063" x2="1576" y2="1063" stroke="#000" stroke-width="1.2"/>
<rect x="1594" y="1041" width="1" height="1" fill="#8a8a8a"/><rect x="1594" y="1044" width="1" height="1" fill="#8a8a8a"/><rect x="1594" y="1047" width="1" height="1" fill="#8a8a8a"/><rect x="1594" y="1050" width="1" height="1" fill="#8a8a8a"/><rect x="1594" y="1053" width="1" height="1" fill="#8a8a8a"/><rect x="1594" y="1056" width="1" height="1" fill="#8a8a8a"/><rect x="1594" y="1059" width="1" height="1" fill="#8a8a8a"/><rect x="1594" y="1062" width="1" height="1" fill="#8a8a8a"/><rect x="1594" y="1065" width="1" height="1" fill="#8a8a8a"/><rect x="1594" y="1068" width="1" height="1" fill="#8a8a8a"/><rect x="1594" y="1071" width="1" height="1" fill="#8a8a8a"/><rect x="1594" y="1074" width="1" height="1" fill="#8a8a8a"/>
<rect x="1608.5" y="1044.5" width="20" height="7" rx="2" fill="#ffcc00" stroke="#000"/><path d="M1628 1048 Q1632 1049 1631 1054 H1619 V1058" stroke="#444" fill="none"/><rect x="1616.5" y="1059.5" width="5" height="12" rx="2" fill="#e00" stroke="#000"/></svg>

</body></html>
